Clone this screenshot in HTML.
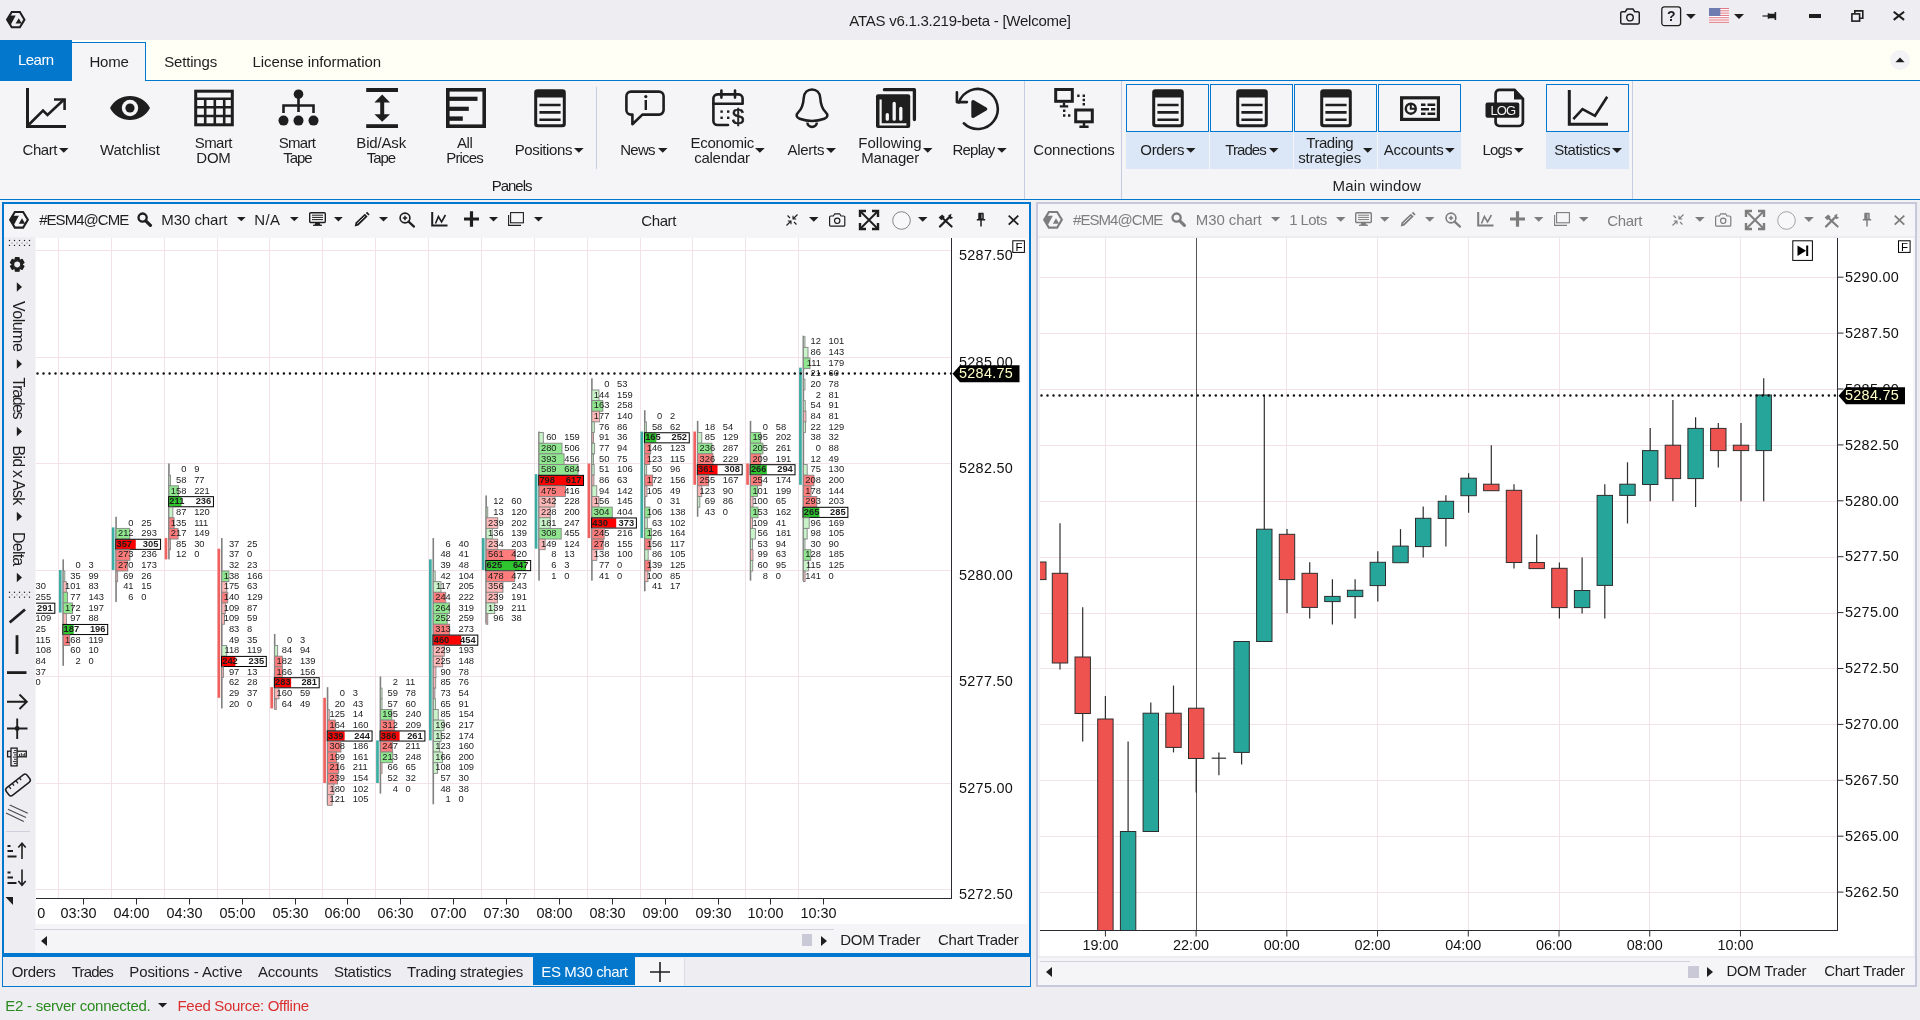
<!DOCTYPE html>
<html lang="en"><head><meta charset="utf-8"><title>ATAS v6.1.3.219-beta - [Welcome]</title>
<style>
html,body{margin:0;padding:0;}
body{width:1920px;height:1020px;overflow:hidden;background:#eeeef2;font-family:"Liberation Sans",sans-serif;position:relative;}
div{position:absolute;box-sizing:border-box;}
.t{position:absolute;white-space:nowrap;line-height:20px;color:#1e1e1e;}
.a{position:absolute;display:block;overflow:visible;}
svg text{font-family:"Liberation Sans",sans-serif;}
</style></head>
<body>
<div id="app" style="left:0;top:0;width:1920px;height:1020px;will-change:transform;">
<div id="titlebar" style="left:0;top:0;width:1920px;height:40px;background:#eeeef2;">
<svg class="a" style="left:6.20px;top:11.30px" width="19.6" height="17.25" viewBox="0 0 20 17.6"><path d="M1.15 8.8L5.85 1H14.15L18.85 8.8L14.15 16.6H5.85Z" fill="none" stroke="#1e1e1e" stroke-width="2.1" stroke-linejoin="miter"/><path d="M1.2 8.8L3.9 4.7H9.9L4.7 14.2Z" fill="#1e1e1e"/><path d="M13 7.3L9.8 12.7H16.2Z" fill="#1e1e1e"/></svg>
<span class="t" style="left:849.30px;top:11.00px;font-size:15px;letter-spacing:-0.244px;">ATAS v6.1.3.219-beta - [Welcome]</span>
<svg class="a" style="left:1620.00px;top:7.50px" width="20.0" height="17.0" viewBox="0 0 16.5 14"><path d="M1.800 3H4.400L5.800 0.800H10.700L12.100 3H14.700a1.200 1.200 0 0 1 1.200 1.200V12a1.200 1.200 0 0 1 -1.200 1.200H1.800A1.200 1.200 0 0 1 0.600 12V4.200A1.200 1.200 0 0 1 1.800 3Z" fill="none" stroke="#1e1e1e" stroke-width="1.200"/><circle cx="8.250" cy="7.900" r="2.700" fill="none" stroke="#1e1e1e" stroke-width="1.200"/></svg>
<svg class="a" style="left:1661.00px;top:6.00px" width="21" height="21" viewBox="0 0 21 21"><rect x="0.800" y="0.800" width="18.800" height="18.800" rx="2.500" fill="none" stroke="#1e1e1e" stroke-width="1.300"/><text x="10.200" y="15.200" font-size="14" font-weight="bold" text-anchor="middle" fill="#1e1e1e">?</text></svg>
<svg class="a" style="left:1686.00px;top:13.95px" width="9.80" height="4.90" viewBox="0 0 10 5"><path d="M0 0H10L5 5Z" fill="#1e1e1e"/></svg>
<svg class="a" style="left:1709.00px;top:8.00px" width="20" height="15.2" viewBox="0 0 20 15.2"><rect x="0" y="0" width="20" height="15" fill="#fff"/><rect x="0" y="0.00" width="20" height="1.050" fill="#e07a86"/><rect x="0" y="2.30" width="20" height="1.050" fill="#e07a86"/><rect x="0" y="4.60" width="20" height="1.050" fill="#e07a86"/><rect x="0" y="6.90" width="20" height="1.050" fill="#e07a86"/><rect x="0" y="9.20" width="20" height="1.050" fill="#e07a86"/><rect x="0" y="11.50" width="20" height="1.050" fill="#e07a86"/><rect x="0" y="13.80" width="20" height="1.050" fill="#e07a86"/><rect x="0" y="0" width="11.300" height="8" fill="#6e7cb2"/></svg>
<svg class="a" style="left:1734.00px;top:13.90px" width="10.00" height="5.00" viewBox="0 0 10 5"><path d="M0 0H10L5 5Z" fill="#1e1e1e"/></svg>
<svg class="a" style="left:1762.00px;top:11.00px" width="16" height="10" viewBox="0 0 16 10"><path d="M0.500 5H8" stroke="#1e1e1e" stroke-width="1.200"/><path d="M6.500 2.200V7.800M7.400 3.600H12.600V6.400H7.400ZM13.400 1V9" fill="#1e1e1e" stroke="#1e1e1e" stroke-width="1.600"/></svg>
<div style="left:1809px;top:14px;width:12px;height:4px;background:#1e1e1e;"></div>
<svg class="a" style="left:1851.00px;top:10.00px" width="13" height="12" viewBox="0 0 13 12"><rect x="0.900" y="3.900" width="7.700" height="7.200" fill="none" stroke="#1e1e1e" stroke-width="1.600"/><path d="M3.800 3.600V0.900H11.800V8.200H9" fill="none" stroke="#1e1e1e" stroke-width="1.600"/></svg>
<svg class="a" style="left:1893.30px;top:11.30px" width="11.8" height="9.6" viewBox="0 0 11.8 9.6"><path d="M0.700 0.700L11.100000000000001 8.9M11.100000000000001 0.700L0.700 8.9" stroke="#1e1e1e" stroke-width="2"/></svg>
</div>
<div id="tabstrip" style="left:0;top:40px;width:1920px;height:41px;background:#fffff5;border-bottom:1px solid #0078d0;">
</div>
<div style="left:0px;top:40px;width:72px;height:41px;background:#0277cc;"></div>
<span class="t" style="left:18.00px;top:50.00px;font-size:15px;letter-spacing:-0.541px;color:#ffffff;">Learn</span>
<div style="left:71px;top:42px;width:75px;height:39px;background:#f5f5f7;border:1px solid #0078d0;border-bottom:none;"></div>
<span class="t" style="left:89.50px;top:52.00px;font-size:15px;letter-spacing:-0.237px;">Home</span>
<span class="t" style="left:164.20px;top:52.00px;font-size:15px;letter-spacing:-0.171px;">Settings</span>
<span class="t" style="left:252.50px;top:52.00px;font-size:15px;letter-spacing:-0.087px;">License information</span>
<svg class="a" style="left:1890.00px;top:50.00px" width="20" height="20" viewBox="0 0 20 20"><circle cx="10" cy="10" r="10" fill="#f3f3f6"/><path d="M5.400 12.200H14.600L10 7.600Z" fill="#1e1e1e"/></svg>
<div id="ribbon" style="left:0;top:81px;width:1920px;height:119px;background:#f5f5f7;border-bottom:1px solid #0078d0;"></div>
<div style="left:0px;top:200px;width:1920px;height:2px;background:#f2f2f5;"></div>
<div style="left:596px;top:87px;width:1px;height:82px;background:#c5cbe0;"></div>
<div style="left:1024px;top:81px;width:1px;height:118px;background:#c5cbe0;"></div>
<div style="left:1121px;top:81px;width:1px;height:118px;background:#c5cbe0;"></div>
<div style="left:1632px;top:81px;width:1px;height:118px;background:#c5cbe0;"></div>
<div style="left:1126px;top:132px;width:83px;height:37px;background:#dbe7f6;"></div>
<div style="left:1126px;top:84px;width:83px;height:48px;background:#f5f5f7;border:1px solid #0078d0;"></div>
<div style="left:1210px;top:132px;width:83px;height:37px;background:#dbe7f6;"></div>
<div style="left:1210px;top:84px;width:83px;height:48px;background:#f5f5f7;border:1px solid #0078d0;"></div>
<div style="left:1294px;top:132px;width:83px;height:37px;background:#dbe7f6;"></div>
<div style="left:1294px;top:84px;width:83px;height:48px;background:#f5f5f7;border:1px solid #0078d0;"></div>
<div style="left:1378px;top:132px;width:83px;height:37px;background:#dbe7f6;"></div>
<div style="left:1378px;top:84px;width:83px;height:48px;background:#f5f5f7;border:1px solid #0078d0;"></div>
<div style="left:1546px;top:132px;width:83px;height:37px;background:#dbe7f6;"></div>
<div style="left:1546px;top:84px;width:83px;height:48px;background:#f5f5f7;border:1px solid #0078d0;"></div>
<svg class="a" style="left:26.00px;top:88.00px" width="40" height="40" viewBox="0 0 40 40"><path d="M1.5 0V38.5H40" fill="none" stroke="#1e1e1e" stroke-width="3"/><path d="M3 36.5L17 22.5L21.5 27L38 11.5" fill="none" stroke="#1e1e1e" stroke-width="2.6"/><path d="M28 11.5H38.6V22" fill="none" stroke="#1e1e1e" stroke-width="2.6"/></svg>
<svg class="a" style="left:110.00px;top:88.00px" width="40" height="40" viewBox="0 0 40 40"><path d="M0 20C8 4 32 4 40 20C32 36 8 36 0 20Z" fill="#1e1e1e"/><circle cx="20" cy="20" r="8.2" fill="#f5f5f7"/><circle cx="20" cy="20" r="4.6" fill="#1e1e1e"/></svg>
<svg class="a" style="left:194.00px;top:88.00px" width="40" height="40" viewBox="0 0 40 40"><rect x="1.7" y="3.2" width="36.6" height="33.6" fill="none" stroke="#1e1e1e" stroke-width="3"/><path d="M2 10.8H38M2 19.2H38M2 28H38M11.2 10.8V36M20.8 10.8V36M30.2 10.8V36" stroke="#1e1e1e" stroke-width="2.6" fill="none"/></svg>
<svg class="a" style="left:277.50px;top:88.00px" width="40" height="40" viewBox="0 0 40 40"><circle cx="20.5" cy="6.2" r="4.8" fill="#1e1e1e"/><path d="M20.5 10V24M5.5 25V17.5H35.5V25" fill="none" stroke="#1e1e1e" stroke-width="2.6"/><circle cx="5.5" cy="32.6" r="5" fill="#1e1e1e"/><circle cx="20.5" cy="32.6" r="5" fill="#1e1e1e"/><circle cx="35.5" cy="32.6" r="5" fill="#1e1e1e"/></svg>
<svg class="a" style="left:362.00px;top:88.00px" width="40" height="40" viewBox="0 0 40 40"><rect x="4.2" y="0" width="31.8" height="4" fill="#1e1e1e"/><rect x="4.2" y="36.2" width="31.8" height="3.8" fill="#1e1e1e"/><path d="M20.2 6.6L28 14.6H22.2V26.2H28L20.2 33.8L12.4 26.2H18.2V14.6H12.4Z" fill="#1e1e1e"/></svg>
<svg class="a" style="left:446.00px;top:88.00px" width="40" height="40" viewBox="0 0 40 40"><rect x="1.8" y="1.8" width="36.4" height="36.4" fill="none" stroke="#1e1e1e" stroke-width="3.6"/><rect x="3" y="8.7" width="28.5" height="4.2" fill="#1e1e1e"/><rect x="3" y="18.7" width="19.8" height="4.2" fill="#1e1e1e"/><rect x="3" y="28.4" width="13.8" height="4.4" fill="#1e1e1e"/></svg>
<svg class="a" style="left:530.00px;top:88.00px" width="40" height="40" viewBox="0 0 40 40"><path d="M7.5 1.2H32.5a3.3 3.3 0 0 1 3.3 3.3V36a3.3 3.3 0 0 1 -3.3 3.3H7.5a3.3 3.3 0 0 1 -3.3 -3.3V4.5a3.3 3.3 0 0 1 3.3 -3.3Z" fill="#1e1e1e"/><path d="M7.2 9.6H32.8V35.2a1 1 0 0 1 -1 1H8.2a1 1 0 0 1 -1 -1Z" fill="#f5f5f7"/><path d="M9.4 17H30.6M9.4 24.4H30.6M9.4 31.7H30.6" stroke="#1e1e1e" stroke-width="2.6"/></svg>
<svg class="a" style="left:624.00px;top:88.00px" width="40" height="40" viewBox="0 0 40 40"><path d="M7 3.6H35a4.6 4.6 0 0 1 4.6 4.6V22a4.6 4.6 0 0 1 -4.6 4.6H18.4L8.4 36.2V26.6H7a4.6 4.6 0 0 1 -4.6 -4.6V8.200a4.6 4.600 0 0 1 4.6 -4.6Z" fill="none" stroke="#1e1e1e" stroke-width="2.6" stroke-linejoin="round"/><circle cx="21.8" cy="8.6" r="1.6" fill="#1e1e1e"/><path d="M21.8 12V22" stroke="#1e1e1e" stroke-width="2.4"/></svg>
<svg class="a" style="left:708.00px;top:88.00px" width="40" height="40" viewBox="0 0 40 40"><path d="M34.6 15V10.4a4 4 0 0 0 -4 -4H9.4a4 4 0 0 0 -4 4V33a4 4 0 0 0 4 4H20" fill="none" stroke="#1e1e1e" stroke-width="2.6" stroke-linecap="round"/><path d="M5.4 15.8H34.6M13.4 2.6V9.6M27 2.6V9.6" stroke="#1e1e1e" stroke-width="2.6" stroke-linecap="round"/><rect x="12.4" y="22.4" width="2.4" height="2.4" fill="#1e1e1e"/><rect x="19" y="22.4" width="2.4" height="2.4" fill="#1e1e1e"/><rect x="12.4" y="28.6" width="2.4" height="2.4" fill="#1e1e1e"/><rect x="19" y="28.6" width="2.4" height="2.4" fill="#1e1e1e"/><text x="30.200" y="35.600" font-size="22" text-anchor="middle" fill="#1e1e1e" stroke="#1e1e1e" stroke-width="0.600" font-family="Liberation Sans,sans-serif">$</text></svg>
<svg class="a" style="left:792.00px;top:88.00px" width="40" height="40" viewBox="0 0 40 40"><path d="M20 1.400C24.600 1.400 27.800 4.600 28.200 9.600C28.600 15 29.200 20 33.600 24.200C36.400 26.800 35.800 29.600 32.400 30.800C25 33.400 15 33.400 7.600 30.800C4.200 29.600 3.600 26.800 6.400 24.200C10.800 20 11.400 15 11.800 9.600C12.200 4.600 15.400 1.400 20 1.400Z" fill="none" stroke="#1e1e1e" stroke-width="2.500"/><path d="M15.400 34.600a4.700 4.300 0 0 0 9.400 0" fill="none" stroke="#1e1e1e" stroke-width="2.500"/></svg>
<svg class="a" style="left:875.80px;top:88.00px" width="40" height="40" viewBox="0 0 40 40"><path d="M8.400 1.700H38.400V31.600" fill="none" stroke="#1e1e1e" stroke-width="3.300" stroke-linecap="round" stroke-linejoin="round"/><rect x="0" y="6.200" width="34.200" height="33.800" rx="2" fill="#1e1e1e"/><path d="M4.600 11.600V36.400H30.400" fill="none" stroke="#f5f5f7" stroke-width="2.200"/><path d="M11.300 26.600V31.200M18.200 15.400V31.200M24.800 20.400V31.200" stroke="#f5f5f7" stroke-width="3.300" stroke-linecap="round"/></svg>
<svg class="a" style="left:958.00px;top:88.00px" width="40" height="40" viewBox="0 0 40 40"><path d="M0.900 14.400A20 20 0 1 1 5.800 35.300" fill="none" stroke="#1e1e1e" stroke-width="2.600" stroke-linecap="round"/><path d="M-1.100 4.200V14.100H8.900" fill="none" stroke="#1e1e1e" stroke-width="2.600" stroke-linecap="round" stroke-linejoin="round"/><path d="M13.300 13.800a1.800 1.800 0 0 1 2.700 -1.560L28.400 19.400a1.800 1.800 0 0 1 0 3.100L16 29.800a1.800 1.800 0 0 1 -2.700 -1.560Z" fill="#1e1e1e"/></svg>
<svg class="a" style="left:1054.00px;top:88.00px" width="40" height="40" viewBox="0 0 40 40"><rect x="1.700" y="1.500" width="16.600" height="11.800" fill="none" stroke="#1e1e1e" stroke-width="3"/><path d="M10 14.500V18M5.800 18.400H14.200" stroke="#1e1e1e" stroke-width="2.400"/><rect x="21.700" y="22" width="16.600" height="11.800" fill="none" stroke="#1e1e1e" stroke-width="3"/><path d="M30 35V38.400M25.400 38.800H34.600" stroke="#1e1e1e" stroke-width="2.400"/><path d="M9 22.800h2.400M9 27.500h2.400M14 27.500h2.400M23.200 7.800h2.400M28.600 7.800h2.400M28.600 12h2.400M28.600 16.200h2.400" stroke="#1e1e1e" stroke-width="2.400"/></svg>
<svg class="a" style="left:1147.50px;top:88.00px" width="40" height="40" viewBox="0 0 40 40"><path d="M7.5 1.2H32.5a3.3 3.3 0 0 1 3.3 3.3V36a3.3 3.3 0 0 1 -3.3 3.3H7.5a3.3 3.3 0 0 1 -3.3 -3.3V4.5a3.3 3.3 0 0 1 3.3 -3.3Z" fill="#1e1e1e"/><path d="M7.2 9.6H32.8V35.2a1 1 0 0 1 -1 1H8.2a1 1 0 0 1 -1 -1Z" fill="#f5f5f7"/><path d="M9.4 17H30.6M9.4 24.4H30.6M9.4 31.7H30.6" stroke="#1e1e1e" stroke-width="2.6"/></svg>
<svg class="a" style="left:1231.50px;top:88.00px" width="40" height="40" viewBox="0 0 40 40"><path d="M7.5 1.2H32.5a3.3 3.3 0 0 1 3.3 3.3V36a3.3 3.3 0 0 1 -3.3 3.3H7.5a3.3 3.3 0 0 1 -3.3 -3.3V4.5a3.3 3.3 0 0 1 3.3 -3.3Z" fill="#1e1e1e"/><path d="M7.2 9.6H32.8V35.2a1 1 0 0 1 -1 1H8.2a1 1 0 0 1 -1 -1Z" fill="#f5f5f7"/><path d="M9.4 17H30.6M9.4 24.4H30.6M9.4 31.7H30.6" stroke="#1e1e1e" stroke-width="2.6"/></svg>
<svg class="a" style="left:1315.50px;top:88.00px" width="40" height="40" viewBox="0 0 40 40"><path d="M7.5 1.2H32.5a3.3 3.3 0 0 1 3.3 3.3V36a3.3 3.3 0 0 1 -3.3 3.3H7.5a3.3 3.3 0 0 1 -3.3 -3.3V4.5a3.3 3.3 0 0 1 3.3 -3.3Z" fill="#1e1e1e"/><path d="M7.2 9.6H32.8V35.2a1 1 0 0 1 -1 1H8.2a1 1 0 0 1 -1 -1Z" fill="#f5f5f7"/><path d="M9.4 17H30.6M9.4 24.4H30.6M9.4 31.7H30.6" stroke="#1e1e1e" stroke-width="2.6"/></svg>
<svg class="a" style="left:1400.00px;top:88.00px" width="40" height="40" viewBox="0 0 40 40"><rect x="1.600" y="9.800" width="36.800" height="21.600" fill="none" stroke="#1e1e1e" stroke-width="3.200"/><circle cx="10.800" cy="20.700" r="5" fill="none" stroke="#1e1e1e" stroke-width="2.400"/><path d="M10.800 16V20.700H15.500" fill="none" stroke="#1e1e1e" stroke-width="2"/><path d="M21 16.800H25.500M27.500 16.800H35.200M21 21.300H29M31 21.300H35.200M21 25.800H25.500M27.500 25.800H35.200" stroke="#1e1e1e" stroke-width="2.500"/></svg>
<svg class="a" style="left:1484.50px;top:88.00px" width="40" height="40" viewBox="0 0 40 40"><path d="M14.300 1.900H29.500L37.900 10.700V34.300a3.700 3.700 0 0 1 -3.700 3.700H14.300a3.700 3.700 0 0 1 -3.700 -3.700V5.600A3.700 3.700 0 0 1 14.300 1.900Z" fill="none" stroke="#1e1e1e" stroke-width="2.700"/><path d="M29 1.400L38.600 11.400H29Z" fill="#1e1e1e"/><rect x="0.500" y="14.500" width="33.800" height="15.200" rx="2" fill="#1e1e1e"/><text x="17.800" y="27.200" font-size="13" text-anchor="middle" fill="#f5f5f7" font-family="Liberation Sans,sans-serif" letter-spacing="-0.900">LOG</text></svg>
<svg class="a" style="left:1568.00px;top:88.00px" width="40" height="40" viewBox="0 0 40 40"><path d="M1.300 2V36.300H40" fill="none" stroke="#1e1e1e" stroke-width="3"/><path d="M5.300 31.200L14.500 21.200L27 27.800L39.200 8.700" fill="none" stroke="#1e1e1e" stroke-width="2.600"/></svg>
<span class="t" style="left:22.50px;top:140.00px;font-size:15px;letter-spacing:-0.420px;">Chart</span>
<svg class="a" style="left:59.00px;top:148.03px" width="9.50" height="4.75" viewBox="0 0 10 5"><path d="M0 0H10L5 5Z" fill="#1e1e1e"/></svg>
<span class="t" style="left:100.00px;top:140.00px;font-size:15px;letter-spacing:-0.036px;">Watchlist</span>
<span class="t" style="left:194.70px;top:133.00px;font-size:15px;letter-spacing:-0.551px;">Smart</span>
<span class="t" style="left:196.30px;top:148.00px;font-size:15px;letter-spacing:-0.248px;">DOM</span>
<span class="t" style="left:278.70px;top:133.00px;font-size:15px;letter-spacing:-0.676px;">Smart</span>
<span class="t" style="left:283.30px;top:148.00px;font-size:15px;letter-spacing:-1.109px;">Tape</span>
<span class="t" style="left:356.30px;top:133.00px;font-size:15px;letter-spacing:-0.159px;">Bid/Ask</span>
<span class="t" style="left:366.70px;top:148.00px;font-size:15px;letter-spacing:-1.009px;">Tape</span>
<span class="t" style="left:457.00px;top:133.00px;font-size:15px;letter-spacing:-0.435px;">All</span>
<span class="t" style="left:446.20px;top:148.00px;font-size:15px;letter-spacing:-0.815px;">Prices</span>
<span class="t" style="left:514.70px;top:140.00px;font-size:15px;letter-spacing:-0.383px;">Positions</span>
<svg class="a" style="left:574.00px;top:147.97px" width="9.70" height="4.85" viewBox="0 0 10 5"><path d="M0 0H10L5 5Z" fill="#1e1e1e"/></svg>
<span class="t" style="left:620.30px;top:140.00px;font-size:15px;letter-spacing:-0.769px;">News</span>
<svg class="a" style="left:657.50px;top:148.03px" width="9.50" height="4.75" viewBox="0 0 10 5"><path d="M0 0H10L5 5Z" fill="#1e1e1e"/></svg>
<span class="t" style="left:690.50px;top:133.00px;font-size:15px;letter-spacing:-0.309px;">Economic</span>
<span class="t" style="left:694.20px;top:148.00px;font-size:15px;letter-spacing:-0.249px;">calendar</span>
<svg class="a" style="left:755.30px;top:147.97px" width="9.70" height="4.85" viewBox="0 0 10 5"><path d="M0 0H10L5 5Z" fill="#1e1e1e"/></svg>
<span class="t" style="left:787.50px;top:140.00px;font-size:15px;letter-spacing:-0.269px;">Alerts</span>
<svg class="a" style="left:826.00px;top:147.90px" width="10.00" height="5.00" viewBox="0 0 10 5"><path d="M0 0H10L5 5Z" fill="#1e1e1e"/></svg>
<span class="t" style="left:858.30px;top:133.00px;font-size:15px;">Following</span>
<span class="t" style="left:861.30px;top:148.00px;font-size:15px;letter-spacing:-0.217px;">Manager</span>
<svg class="a" style="left:923.30px;top:148.03px" width="9.50" height="4.75" viewBox="0 0 10 5"><path d="M0 0H10L5 5Z" fill="#1e1e1e"/></svg>
<span class="t" style="left:952.50px;top:140.00px;font-size:15px;letter-spacing:-0.778px;">Replay</span>
<svg class="a" style="left:997.00px;top:147.97px" width="9.70" height="4.85" viewBox="0 0 10 5"><path d="M0 0H10L5 5Z" fill="#1e1e1e"/></svg>
<span class="t" style="left:1033.30px;top:140.00px;font-size:15px;letter-spacing:-0.199px;">Connections</span>
<span class="t" style="left:1140.30px;top:140.00px;font-size:15px;letter-spacing:-0.329px;">Orders</span>
<svg class="a" style="left:1186.30px;top:148.03px" width="9.50" height="4.75" viewBox="0 0 10 5"><path d="M0 0H10L5 5Z" fill="#1e1e1e"/></svg>
<span class="t" style="left:1225.30px;top:140.00px;font-size:15px;letter-spacing:-0.946px;">Trades</span>
<svg class="a" style="left:1268.50px;top:148.03px" width="9.50" height="4.75" viewBox="0 0 10 5"><path d="M0 0H10L5 5Z" fill="#1e1e1e"/></svg>
<span class="t" style="left:1306.30px;top:133.00px;font-size:15px;letter-spacing:-0.484px;">Trading</span>
<span class="t" style="left:1298.30px;top:148.00px;font-size:15px;letter-spacing:-0.237px;">strategies</span>
<svg class="a" style="left:1363.30px;top:148.03px" width="9.50" height="4.75" viewBox="0 0 10 5"><path d="M0 0H10L5 5Z" fill="#1e1e1e"/></svg>
<span class="t" style="left:1383.70px;top:140.00px;font-size:15px;letter-spacing:-0.243px;">Accounts</span>
<svg class="a" style="left:1445.30px;top:147.97px" width="9.70" height="4.85" viewBox="0 0 10 5"><path d="M0 0H10L5 5Z" fill="#1e1e1e"/></svg>
<span class="t" style="left:1482.50px;top:140.00px;font-size:15px;letter-spacing:-0.842px;">Logs</span>
<svg class="a" style="left:1514.00px;top:147.97px" width="9.70" height="4.85" viewBox="0 0 10 5"><path d="M0 0H10L5 5Z" fill="#1e1e1e"/></svg>
<span class="t" style="left:1554.20px;top:140.00px;font-size:15px;letter-spacing:-0.413px;">Statistics</span>
<svg class="a" style="left:1612.00px;top:147.90px" width="10.00" height="5.00" viewBox="0 0 10 5"><path d="M0 0H10L5 5Z" fill="#1e1e1e"/></svg>
<span class="t" style="left:491.70px;top:176.10px;font-size:15px;letter-spacing:-1.013px;">Panels</span>
<span class="t" style="left:1332.50px;top:176.10px;font-size:15px;letter-spacing:0.160px;">Main window</span>
<div id="leftpanel" style="left:2px;top:202px;width:1029px;height:755px;background:#f5f5f7;border:2px solid #0078d0;border-bottom-width:4px;"></div>
<svg class="a" style="left:9.00px;top:211.20px" width="20" height="17.6" viewBox="0 0 20 17.6"><path d="M1.15 8.8L5.85 1H14.15L18.85 8.8L14.15 16.6H5.85Z" fill="none" stroke="#1e1e1e" stroke-width="2.1" stroke-linejoin="miter"/><path d="M1.2 8.8L3.9 4.7H9.9L4.7 14.2Z" fill="#1e1e1e"/><path d="M13 7.3L9.8 12.7H16.2Z" fill="#1e1e1e"/></svg>
<span class="t" style="left:39.20px;top:209.60px;font-size:15px;letter-spacing:-0.969px;">#ESM4@CME</span>
<svg class="a" style="left:136.70px;top:211.60px" width="15" height="15" viewBox="0 0 15 15"><circle cx="5.600" cy="5.600" r="4.100" fill="none" stroke="#1e1e1e" stroke-width="2.300"/><path d="M8.800 8.800L13.400 13.400" stroke="#1e1e1e" stroke-width="3.200" stroke-linecap="round"/></svg>
<span class="t" style="left:161.30px;top:209.60px;font-size:15px;letter-spacing:-0.062px;">M30 chart</span>
<svg class="a" style="left:236.70px;top:217.45px" width="8.60" height="4.30" viewBox="0 0 10 5"><path d="M0 0H10L5 5Z" fill="#1e1e1e"/></svg>
<span class="t" style="left:254.20px;top:209.60px;font-size:15px;letter-spacing:0.398px;">N/A</span>
<svg class="a" style="left:289.70px;top:217.45px" width="8.60" height="4.30" viewBox="0 0 10 5"><path d="M0 0H10L5 5Z" fill="#1e1e1e"/></svg>
<svg class="a" style="left:308.60px;top:212.40px" width="17" height="14" viewBox="0 0 17 14"><rect x="0.700" y="0.700" width="15.600" height="9.800" rx="1" fill="none" stroke="#1e1e1e" stroke-width="1.400"/><path d="M3 3.200H14M3 5.400H14M3 7.600H14" stroke="#1e1e1e" stroke-width="1"/><path d="M6.500 10.500L5.500 13H11.500L10.500 10.500Z" fill="#1e1e1e"/><path d="M4 13.300H13" stroke="#1e1e1e" stroke-width="1.200"/></svg>
<svg class="a" style="left:333.80px;top:217.40px" width="8.80" height="4.40" viewBox="0 0 10 5"><path d="M0 0H10L5 5Z" fill="#1e1e1e"/></svg>
<svg class="a" style="left:354.20px;top:211.70px" width="16" height="15" viewBox="0 0 16 15"><path d="M0.600 14.600L1.600 10.400L10.800 1.800L13.600 4.600L4.400 13.400Z" fill="#1e1e1e"/><path d="M11.800 1L13.200 -0.200L15.600 2.400L14.400 3.600Z" fill="#1e1e1e"/><path d="M3.200 11.600L10.900 4.300" stroke="#f5f5f7" stroke-width="0.900"/></svg>
<svg class="a" style="left:379.00px;top:217.35px" width="9.00" height="4.50" viewBox="0 0 10 5"><path d="M0 0H10L5 5Z" fill="#1e1e1e"/></svg>
<svg class="a" style="left:399.00px;top:212.00px" width="16" height="15" viewBox="0 0 16 15"><circle cx="6" cy="6" r="4.900" fill="none" stroke="#1e1e1e" stroke-width="1.600"/><path d="M9.600 9.600L15 14.600" stroke="#1e1e1e" stroke-width="2.200" stroke-linecap="round"/><path d="M6 3.800V8.200M3.800 6H8.200" stroke="#1e1e1e" stroke-width="1.500"/></svg>
<svg class="a" style="left:430.50px;top:212.00px" width="17" height="15" viewBox="0 0 17 15"><path d="M1.200 0V13.600H16.500" fill="none" stroke="#1e1e1e" stroke-width="2"/><path d="M4.500 11.500L7.400 4.600L10.600 10L14.400 3" fill="none" stroke="#1e1e1e" stroke-width="1.600"/></svg>
<svg class="a" style="left:464.00px;top:211.00px" width="15" height="16" viewBox="0 0 15 16"><path d="M7.500 0.300V15.700M0 8H15" stroke="#1e1e1e" stroke-width="3.200"/></svg>
<svg class="a" style="left:488.50px;top:217.35px" width="9.00" height="4.50" viewBox="0 0 10 5"><path d="M0 0H10L5 5Z" fill="#1e1e1e"/></svg>
<svg class="a" style="left:508.00px;top:212.40px" width="16" height="14" viewBox="0 0 16 14"><rect x="2.600" y="0.600" width="12.800" height="10.200" fill="#f5f5f7" stroke="#1e1e1e" stroke-width="1.100"/><path d="M0.600 3V13.400H13" fill="none" stroke="#1e1e1e" stroke-width="1.100"/></svg>
<svg class="a" style="left:533.50px;top:217.35px" width="9.00" height="4.50" viewBox="0 0 10 5"><path d="M0 0H10L5 5Z" fill="#1e1e1e"/></svg>
<span class="t" style="left:641.30px;top:210.60px;font-size:15px;letter-spacing:-0.420px;">Chart</span>
<svg class="a" style="left:786.30px;top:214.00px" width="12" height="12" viewBox="0 0 12 12"><path d="M0.500 11.500L5 7M5 10.200V7H1.800M11.500 0.500L7 5M7 1.800V5H10.200M1.500 1.500L4 4M10.500 10.500L8 8" fill="none" stroke="#1e1e1e" stroke-width="1.100"/></svg>
<svg class="a" style="left:809.00px;top:217.22px" width="9.50" height="4.75" viewBox="0 0 10 5"><path d="M0 0H10L5 5Z" fill="#1e1e1e"/></svg>
<svg class="a" style="left:829.00px;top:213.00px" width="16.4" height="13.9" viewBox="0 0 16.5 14"><path d="M1.800 3H4.400L5.800 0.800H10.700L12.100 3H14.700a1.200 1.200 0 0 1 1.200 1.200V12a1.200 1.200 0 0 1 -1.200 1.200H1.800A1.200 1.200 0 0 1 0.600 12V4.200A1.200 1.200 0 0 1 1.800 3Z" fill="none" stroke="#1e1e1e" stroke-width="1.200"/><circle cx="8.250" cy="7.900" r="2.700" fill="none" stroke="#1e1e1e" stroke-width="1.200"/></svg>
<svg class="a" style="left:859.00px;top:210.20px" width="20" height="20" viewBox="0 0 20 20"><path d="M1.500 1.500L18.500 18.500M18.500 1.500L1.500 18.500" stroke="#1e1e1e" stroke-width="1.900"/><path d="M1 7V1H7M13 1H19V7M19 13V19H13M7 19H1V13" fill="none" stroke="#1e1e1e" stroke-width="2.400"/></svg>
<svg class="a" style="left:891.50px;top:210.50px" width="19" height="19" viewBox="0 0 19 19"><circle cx="9.500" cy="9.500" r="8.800" fill="#f8f8fa" stroke="#777" stroke-width="0.900"/></svg>
<svg class="a" style="left:918.00px;top:217.22px" width="9.50" height="4.75" viewBox="0 0 10 5"><path d="M0 0H10L5 5Z" fill="#1e1e1e"/></svg>
<svg class="a" style="left:938.00px;top:213.50px" width="16" height="14" viewBox="0 0 16 14"><path d="M2 12.500L12 2.500" stroke="#1e1e1e" stroke-width="2.300" stroke-linecap="round"/><path d="M10.300 1.200L13.600 -0.200L12.800 2.600L15.200 3.800L12.400 5.200Z" fill="#1e1e1e"/><path d="M4.200 3.800L13.600 12.600" stroke="#1e1e1e" stroke-width="2.100" stroke-linecap="round"/><path d="M0.600 3.600L4.200 0.400L6.800 3L3.400 6.200Z" fill="#1e1e1e"/></svg>
<svg class="a" style="left:975.50px;top:213.00px" width="10" height="14" viewBox="0 0 10 14"><path d="M2.500 0.600H7.500M3 0.600V6.200H7V0.600M0.800 6.800H9.200M5 7V13.600" fill="none" stroke="#1e1e1e" stroke-width="1.500"/><rect x="3" y="1" width="2.600" height="5.600" fill="#1e1e1e"/></svg>
<svg class="a" style="left:1007.50px;top:215.00px" width="11" height="10.4" viewBox="0 0 11 10.4"><path d="M0.700 0.700L10.3 9.700000000000001M10.3 0.700L0.700 9.700000000000001" stroke="#1e1e1e" stroke-width="1.8"/></svg>
<div style="left:4px;top:237px;width:30.5px;height:716px;background:#eeeef2;"></div>
<svg class="a" style="left:0;top:0" width="40" height="960" viewBox="0 0 40 960"><rect x="8.90" y="239.90" width="1.200" height="1.200" fill="#1e1e1e"/><rect x="8.90" y="244.80" width="1.200" height="1.200" fill="#1e1e1e"/><rect x="11.40" y="242.40" width="1.300" height="1.300" fill="#9a9aa0"/><rect x="13.90" y="239.90" width="1.200" height="1.200" fill="#1e1e1e"/><rect x="13.90" y="244.80" width="1.200" height="1.200" fill="#1e1e1e"/><rect x="16.40" y="242.40" width="1.300" height="1.300" fill="#9a9aa0"/><rect x="18.90" y="239.90" width="1.200" height="1.200" fill="#1e1e1e"/><rect x="18.90" y="244.80" width="1.200" height="1.200" fill="#1e1e1e"/><rect x="21.40" y="242.40" width="1.300" height="1.300" fill="#9a9aa0"/><rect x="23.90" y="239.90" width="1.200" height="1.200" fill="#1e1e1e"/><rect x="23.90" y="244.80" width="1.200" height="1.200" fill="#1e1e1e"/><rect x="26.40" y="242.40" width="1.300" height="1.300" fill="#9a9aa0"/><rect x="28.90" y="239.90" width="1.200" height="1.200" fill="#1e1e1e"/><rect x="28.90" y="244.80" width="1.200" height="1.200" fill="#1e1e1e"/><rect x="8.90" y="591.70" width="1.200" height="1.200" fill="#1e1e1e"/><rect x="8.90" y="596.60" width="1.200" height="1.200" fill="#1e1e1e"/><rect x="11.40" y="594.20" width="1.300" height="1.300" fill="#9a9aa0"/><rect x="13.90" y="591.70" width="1.200" height="1.200" fill="#1e1e1e"/><rect x="13.90" y="596.60" width="1.200" height="1.200" fill="#1e1e1e"/><rect x="16.40" y="594.20" width="1.300" height="1.300" fill="#9a9aa0"/><rect x="18.90" y="591.70" width="1.200" height="1.200" fill="#1e1e1e"/><rect x="18.90" y="596.60" width="1.200" height="1.200" fill="#1e1e1e"/><rect x="21.40" y="594.20" width="1.300" height="1.300" fill="#9a9aa0"/><rect x="23.90" y="591.70" width="1.200" height="1.200" fill="#1e1e1e"/><rect x="23.90" y="596.60" width="1.200" height="1.200" fill="#1e1e1e"/><rect x="26.40" y="594.20" width="1.300" height="1.300" fill="#9a9aa0"/><rect x="28.90" y="591.70" width="1.200" height="1.200" fill="#1e1e1e"/><rect x="28.90" y="596.60" width="1.200" height="1.200" fill="#1e1e1e"/><path d="M19.22 269.19L19.07 271.15L15.33 271.15L15.18 269.19L14.06 268.55L12.29 269.39L10.42 266.16L12.04 265.04L12.04 263.76L10.42 262.64L12.29 259.41L14.06 260.25L15.18 259.61L15.33 257.65L19.07 257.65L19.22 259.61L20.34 260.25L22.11 259.41L23.98 262.64L22.36 263.76L22.36 265.04L23.98 266.16L22.11 269.39L20.34 268.55ZM20.80 264.40A3.6 3.6 0 1 0 13.60 264.40A3.6 3.6 0 1 0 20.80 264.40Z" fill="#1e1e1e" stroke="#1e1e1e" stroke-width="1.200" stroke-linejoin="round" fill-rule="evenodd"/><path d="M16.800 282.3V291.7L22 287Z" fill="#1e1e1e"/><path d="M16.800 359.3V368.7L22 364Z" fill="#1e1e1e"/><path d="M16.800 426.8V436.2L22 431.5Z" fill="#1e1e1e"/><path d="M16.800 511.8V521.2L22 516.5Z" fill="#1e1e1e"/><path d="M16.800 572.8V582.2L22 577.5Z" fill="#1e1e1e"/><text transform="translate(12.500 301) rotate(90)" font-size="16" letter-spacing="-0.514" fill="#1e1e1e">Volume</text><text transform="translate(12.500 377.5) rotate(90)" font-size="16" letter-spacing="-1.421" fill="#1e1e1e">Trades</text><text transform="translate(12.500 445.5) rotate(90)" font-size="16" letter-spacing="-0.763" fill="#1e1e1e">Bid x Ask</text><text transform="translate(12.500 532) rotate(90)" font-size="16" letter-spacing="-0.788" fill="#1e1e1e">Delta</text><path d="M9.700 622.500L25 609.500" stroke="#1e1e1e" stroke-width="2.800"/><path d="M17 635.200V654" stroke="#1e1e1e" stroke-width="2.800"/><path d="M7 672.600H26.500" stroke="#1e1e1e" stroke-width="2.800"/><path d="M7 701.700H26.500M19.500 694.500L26.800 701.700L19.500 709" fill="none" stroke="#1e1e1e" stroke-width="1.900"/><path d="M7 728.500H27.500M17.200 718.500V739" stroke="#1e1e1e" stroke-width="1.900"/><circle cx="17.200" cy="728.500" r="2.400" fill="#1e1e1e"/><rect x="7.600" y="751.200" width="18.700" height="5.600" fill="#eeeef2" stroke="#1e1e1e" stroke-width="1.300"/><rect x="11" y="748.100" width="6.100" height="17.800" fill="#eeeef2" stroke="#1e1e1e" stroke-width="1.300"/><path d="M14 750.500H16.500M13 752.700H16.500M14 754.900H16.500M13 757.100H16.500M14 759.300H16.500M13 761.500H16.500M14 763.500H16.500M19.500 754V756.500M21.300 753V756.500M23.100 754V756.500M24.700 753V756.500" stroke="#1e1e1e" stroke-width="0.900"/><g transform="translate(18 785) rotate(-38)"><rect x="-13.200" y="-4.800" width="26.400" height="9.600" rx="2.800" fill="none" stroke="#1e1e1e" stroke-width="1.500"/><path d="M-8 -4.800V-1.300M-3.500 -4.800V-2M1 -4.800V-1.300M5.500 -4.800V-2" stroke="#1e1e1e" stroke-width="1.300"/></g><path d="M9.700 805.100L27.800 813.300M7.900 809.300L26 817.500M6 813L23.800 821.600" stroke="#4a4a4a" stroke-width="1.100"/><path d="M6 831.500H30" stroke="#d0d0dc" stroke-width="1"/><path d="M7.500 846H10.500M7.500 851H13M7.500 856.5H16.500" stroke="#1e1e1e" stroke-width="1.800"/><path d="M22 859V843.5M18.300 847.5L22 843.2L25.700 847.5" fill="none" stroke="#1e1e1e" stroke-width="1.600"/><path d="M7.500 872.5H10.500M7.500 877.5H13M7.500 883.0H16.500" stroke="#1e1e1e" stroke-width="1.800"/><path d="M22 869.5V885.0M18.300 881.0L22 885.3L25.700 881.0" fill="none" stroke="#1e1e1e" stroke-width="1.600"/><path d="M5.500 897H13V905Z" fill="#1e1e1e"/></svg>
<div style="left:36px;top:238px;width:991px;height:686px;background:#ffffff;"></div>
<svg class="a" style="left:36px;top:238px;overflow:hidden" width="991" height="686" viewBox="36 238 991 686"><path d="M58.50 238V898" stroke="#f3e2e7" stroke-width="1"/><path d="M111.50 238V898" stroke="#f3e2e7" stroke-width="1"/><path d="M164.50 238V898" stroke="#f3e2e7" stroke-width="1"/><path d="M217.50 238V898" stroke="#f3e2e7" stroke-width="1"/><path d="M269.50 238V898" stroke="#f3e2e7" stroke-width="1"/><path d="M322.50 238V898" stroke="#f3e2e7" stroke-width="1"/><path d="M375.50 238V898" stroke="#f3e2e7" stroke-width="1"/><path d="M428.50 238V898" stroke="#f3e2e7" stroke-width="1"/><path d="M481.50 238V898" stroke="#f3e2e7" stroke-width="1"/><path d="M534.50 238V898" stroke="#f3e2e7" stroke-width="1"/><path d="M587.50 238V898" stroke="#f3e2e7" stroke-width="1"/><path d="M640.50 238V898" stroke="#f3e2e7" stroke-width="1"/><path d="M692.50 238V898" stroke="#f3e2e7" stroke-width="1"/><path d="M745.50 238V898" stroke="#f3e2e7" stroke-width="1"/><path d="M798.50 238V898" stroke="#f3e2e7" stroke-width="1"/><path d="M36 250.50H951" stroke="#f3e2e7" stroke-width="1"/><path d="M36 357.50H951" stroke="#f3e2e7" stroke-width="1"/><path d="M36 463.50H951" stroke="#f3e2e7" stroke-width="1"/><path d="M36 570.50H951" stroke="#f3e2e7" stroke-width="1"/><path d="M36 676.50H951" stroke="#f3e2e7" stroke-width="1"/><path d="M36 783.50H951" stroke="#f3e2e7" stroke-width="1"/><path d="M36 889.50H951" stroke="#f3e2e7" stroke-width="1"/><g fill="#1c1c1c"><text x="35.53" y="589.40" font-size="9.33">30</text><text x="35.53" y="600.05" font-size="9.33">255</text><rect x="10.03" y="603.15" width="44.800" height="10.100" fill="#fff" stroke="#000" stroke-width="1"/><text x="52.63" y="610.70" font-size="9.33" font-weight="bold" text-anchor="end">291</text><text x="35.53" y="621.35" font-size="9.33">109</text><text x="35.53" y="632.00" font-size="9.33">25</text><text x="35.53" y="642.65" font-size="9.33">115</text><text x="35.53" y="653.30" font-size="9.33">108</text><text x="35.53" y="663.95" font-size="9.33">84</text><text x="35.53" y="674.60" font-size="9.33">37</text><text x="35.53" y="685.25" font-size="9.33">0</text><rect x="58.90" y="570.00" width="2.700" height="42.60" fill="#3bada2"/><rect x="62.40" y="559.35" width="1.600" height="106.50" fill="#808080"/><text x="80.70" y="568.10" font-size="9.33" text-anchor="end">0</text><text x="88.40" y="568.10" font-size="9.33">3</text><rect x="63.20" y="571.00" width="1.60" height="10.650" fill="#c8f2c8" stroke="#868686" stroke-width="0.900"/><text x="80.70" y="578.75" font-size="9.33" text-anchor="end">35</text><text x="88.40" y="578.75" font-size="9.33">99</text><rect x="63.20" y="581.65" width="3.15" height="10.650" fill="#ffb8b8" stroke="#868686" stroke-width="0.900"/><text x="80.70" y="589.40" font-size="9.33" text-anchor="end">101</text><text x="88.40" y="589.40" font-size="9.33">83</text><rect x="63.20" y="592.30" width="4.34" height="10.650" fill="#8fe68f" stroke="#868686" stroke-width="0.900"/><text x="80.70" y="600.05" font-size="9.33" text-anchor="end">77</text><text x="88.40" y="600.05" font-size="9.33">143</text><rect x="63.20" y="602.95" width="9.24" height="10.650" fill="#8fe68f" stroke="#868686" stroke-width="0.900"/><text x="80.70" y="610.70" font-size="9.33" text-anchor="end">172</text><text x="88.40" y="610.70" font-size="9.33">197</text><rect x="63.20" y="613.60" width="3.19" height="10.650" fill="#ffb8b8" stroke="#868686" stroke-width="0.900"/><text x="80.70" y="621.35" font-size="9.33" text-anchor="end">97</text><text x="88.40" y="621.35" font-size="9.33">88</text><rect x="62.90" y="624.45" width="44.800" height="10.100" fill="#fff"/><rect x="63.30" y="624.85" width="10.40" height="9.300" fill="#2fc52f"/><rect x="62.90" y="624.45" width="44.800" height="10.100" fill="none" stroke="#000" stroke-width="1"/><text x="63.60" y="632.00" font-size="9.33" font-weight="bold">187</text><text x="105.50" y="632.00" font-size="9.33" font-weight="bold" text-anchor="end">196</text><rect x="63.20" y="634.90" width="6.54" height="10.650" fill="#ff7c7c" stroke="#868686" stroke-width="0.900"/><text x="80.70" y="642.65" font-size="9.33" text-anchor="end">168</text><text x="88.40" y="642.65" font-size="9.33">119</text><text x="80.70" y="653.30" font-size="9.33" text-anchor="end">60</text><text x="88.40" y="653.30" font-size="9.33">10</text><text x="80.70" y="663.95" font-size="9.33" text-anchor="end">2</text><text x="88.40" y="663.95" font-size="9.33">0</text><rect x="111.77" y="527.40" width="2.700" height="42.60" fill="#3bada2"/><rect x="115.27" y="516.75" width="1.600" height="85.20" fill="#808080"/><text x="133.57" y="525.50" font-size="9.33" text-anchor="end">0</text><text x="141.27" y="525.50" font-size="9.33">25</text><rect x="116.07" y="528.40" width="13.71" height="10.650" fill="#8fe68f" stroke="#868686" stroke-width="0.900"/><text x="133.57" y="536.15" font-size="9.33" text-anchor="end">212</text><text x="141.27" y="536.15" font-size="9.33">293</text><rect x="115.77" y="539.25" width="44.800" height="10.100" fill="#fff"/><rect x="116.17" y="539.65" width="19.58" height="9.300" fill="#ff0000"/><rect x="115.77" y="539.25" width="44.800" height="10.100" fill="none" stroke="#000" stroke-width="1"/><text x="116.47" y="546.80" font-size="9.33" font-weight="bold">357</text><text x="158.37" y="546.80" font-size="9.33" font-weight="bold" text-anchor="end">305</text><rect x="116.07" y="549.70" width="13.85" height="10.650" fill="#ff7c7c" stroke="#868686" stroke-width="0.900"/><text x="133.57" y="557.45" font-size="9.33" text-anchor="end">273</text><text x="141.27" y="557.45" font-size="9.33">236</text><rect x="116.07" y="560.35" width="11.67" height="10.650" fill="#ff7c7c" stroke="#868686" stroke-width="0.900"/><text x="133.57" y="568.10" font-size="9.33" text-anchor="end">270</text><text x="141.27" y="568.10" font-size="9.33">173</text><rect x="116.07" y="571.00" width="1.60" height="10.650" fill="#ffb8b8" stroke="#868686" stroke-width="0.900"/><text x="133.57" y="578.75" font-size="9.33" text-anchor="end">69</text><text x="141.27" y="578.75" font-size="9.33">26</text><text x="133.57" y="589.40" font-size="9.33" text-anchor="end">41</text><text x="141.27" y="589.40" font-size="9.33">15</text><text x="133.57" y="600.05" font-size="9.33" text-anchor="end">6</text><text x="141.27" y="600.05" font-size="9.33">0</text><rect x="164.64" y="538.05" width="2.700" height="21.30" fill="#f0625f"/><rect x="168.14" y="463.50" width="1.600" height="95.85" fill="#808080"/><text x="186.44" y="472.25" font-size="9.33" text-anchor="end">0</text><text x="194.14" y="472.25" font-size="9.33">9</text><rect x="168.94" y="475.15" width="1.60" height="10.650" fill="#c8f2c8" stroke="#868686" stroke-width="0.900"/><text x="186.44" y="482.90" font-size="9.33" text-anchor="end">58</text><text x="194.14" y="482.90" font-size="9.33">77</text><rect x="168.94" y="485.80" width="9.57" height="10.650" fill="#8fe68f" stroke="#868686" stroke-width="0.900"/><text x="186.44" y="493.55" font-size="9.33" text-anchor="end">158</text><text x="194.14" y="493.55" font-size="9.33">221</text><rect x="168.64" y="496.65" width="44.800" height="10.100" fill="#fff"/><rect x="169.04" y="497.05" width="12.51" height="9.300" fill="#2fc52f"/><rect x="168.64" y="496.65" width="44.800" height="10.100" fill="none" stroke="#000" stroke-width="1"/><text x="169.34" y="504.20" font-size="9.33" font-weight="bold">211</text><text x="211.24" y="504.20" font-size="9.33" font-weight="bold" text-anchor="end">236</text><rect x="168.94" y="507.10" width="3.91" height="10.650" fill="#c8f2c8" stroke="#868686" stroke-width="0.900"/><text x="186.44" y="514.85" font-size="9.33" text-anchor="end">87</text><text x="194.14" y="514.85" font-size="9.33">120</text><rect x="168.94" y="517.75" width="5.19" height="10.650" fill="#ff7c7c" stroke="#868686" stroke-width="0.900"/><text x="186.44" y="525.50" font-size="9.33" text-anchor="end">135</text><text x="194.14" y="525.50" font-size="9.33">111</text><rect x="168.94" y="528.40" width="9.14" height="10.650" fill="#ff7c7c" stroke="#868686" stroke-width="0.900"/><text x="186.44" y="536.15" font-size="9.33" text-anchor="end">217</text><text x="194.14" y="536.15" font-size="9.33">149</text><rect x="168.94" y="539.05" width="1.60" height="10.650" fill="#ffb8b8" stroke="#868686" stroke-width="0.900"/><text x="186.44" y="546.80" font-size="9.33" text-anchor="end">85</text><text x="194.14" y="546.80" font-size="9.33">30</text><text x="186.44" y="557.45" font-size="9.33" text-anchor="end">12</text><text x="194.14" y="557.45" font-size="9.33">0</text><rect x="217.51" y="548.70" width="2.700" height="149.10" fill="#f0625f"/><rect x="221.01" y="538.05" width="1.600" height="170.40" fill="#808080"/><text x="239.31" y="546.80" font-size="9.33" text-anchor="end">37</text><text x="247.01" y="546.80" font-size="9.33">25</text><text x="239.31" y="557.45" font-size="9.33" text-anchor="end">37</text><text x="247.01" y="557.45" font-size="9.33">0</text><text x="239.31" y="568.10" font-size="9.33" text-anchor="end">32</text><text x="247.01" y="568.10" font-size="9.33">23</text><rect x="221.81" y="571.00" width="7.10" height="10.650" fill="#8fe68f" stroke="#868686" stroke-width="0.900"/><text x="239.31" y="578.75" font-size="9.33" text-anchor="end">138</text><text x="247.01" y="578.75" font-size="9.33">166</text><rect x="221.81" y="581.65" width="4.93" height="10.650" fill="#ffb8b8" stroke="#868686" stroke-width="0.900"/><text x="239.31" y="589.40" font-size="9.33" text-anchor="end">175</text><text x="247.01" y="589.40" font-size="9.33">63</text><rect x="221.81" y="592.30" width="5.95" height="10.650" fill="#ff7c7c" stroke="#868686" stroke-width="0.900"/><text x="239.31" y="600.05" font-size="9.33" text-anchor="end">140</text><text x="247.01" y="600.05" font-size="9.33">129</text><rect x="221.81" y="602.95" width="3.55" height="10.650" fill="#ffb8b8" stroke="#868686" stroke-width="0.900"/><text x="239.31" y="610.70" font-size="9.33" text-anchor="end">109</text><text x="247.01" y="610.70" font-size="9.33">87</text><rect x="221.81" y="613.60" width="2.63" height="10.650" fill="#ffb8b8" stroke="#868686" stroke-width="0.900"/><text x="239.31" y="621.35" font-size="9.33" text-anchor="end">109</text><text x="247.01" y="621.35" font-size="9.33">59</text><text x="239.31" y="632.00" font-size="9.33" text-anchor="end">83</text><text x="247.01" y="632.00" font-size="9.33">8</text><text x="239.31" y="642.65" font-size="9.33" text-anchor="end">49</text><text x="247.01" y="642.65" font-size="9.33">35</text><rect x="221.81" y="645.55" width="4.90" height="10.650" fill="#c8f2c8" stroke="#868686" stroke-width="0.900"/><text x="239.31" y="653.30" font-size="9.33" text-anchor="end">118</text><text x="247.01" y="653.30" font-size="9.33">119</text><rect x="221.51" y="656.40" width="44.800" height="10.100" fill="#fff"/><rect x="221.91" y="656.80" width="13.49" height="9.300" fill="#ff0000"/><rect x="221.51" y="656.40" width="44.800" height="10.100" fill="none" stroke="#000" stroke-width="1"/><text x="222.21" y="663.95" font-size="9.33" font-weight="bold">242</text><text x="264.11" y="663.95" font-size="9.33" font-weight="bold" text-anchor="end">235</text><rect x="221.81" y="666.85" width="1.60" height="10.650" fill="#ffb8b8" stroke="#868686" stroke-width="0.900"/><text x="239.31" y="674.60" font-size="9.33" text-anchor="end">97</text><text x="247.01" y="674.60" font-size="9.33">13</text><text x="239.31" y="685.25" font-size="9.33" text-anchor="end">62</text><text x="247.01" y="685.25" font-size="9.33">28</text><text x="239.31" y="695.90" font-size="9.33" text-anchor="end">29</text><text x="247.01" y="695.90" font-size="9.33">37</text><text x="239.31" y="706.55" font-size="9.33" text-anchor="end">20</text><text x="247.01" y="706.55" font-size="9.33">0</text><rect x="270.38" y="687.15" width="2.700" height="21.30" fill="#f0625f"/><rect x="273.88" y="633.90" width="1.600" height="74.55" fill="#808080"/><text x="292.18" y="642.65" font-size="9.33" text-anchor="end">0</text><text x="299.88" y="642.65" font-size="9.33">3</text><rect x="274.68" y="645.55" width="2.96" height="10.650" fill="#c8f2c8" stroke="#868686" stroke-width="0.900"/><text x="292.18" y="653.30" font-size="9.33" text-anchor="end">84</text><text x="299.88" y="653.30" font-size="9.33">94</text><rect x="274.68" y="656.20" width="7.66" height="10.650" fill="#ff7c7c" stroke="#868686" stroke-width="0.900"/><text x="292.18" y="663.95" font-size="9.33" text-anchor="end">182</text><text x="299.88" y="663.95" font-size="9.33">139</text><rect x="274.68" y="666.85" width="7.69" height="10.650" fill="#ff7c7c" stroke="#868686" stroke-width="0.900"/><text x="292.18" y="674.60" font-size="9.33" text-anchor="end">166</text><text x="299.88" y="674.60" font-size="9.33">156</text><rect x="274.38" y="677.70" width="44.800" height="10.100" fill="#fff"/><rect x="274.78" y="678.10" width="16.36" height="9.300" fill="#ff0000"/><rect x="274.38" y="677.70" width="44.800" height="10.100" fill="none" stroke="#000" stroke-width="1"/><text x="275.08" y="685.25" font-size="9.33" font-weight="bold">283</text><text x="316.98" y="685.25" font-size="9.33" font-weight="bold" text-anchor="end">281</text><rect x="274.68" y="688.15" width="4.31" height="10.650" fill="#ffb8b8" stroke="#868686" stroke-width="0.900"/><text x="292.18" y="695.90" font-size="9.33" text-anchor="end">160</text><text x="299.88" y="695.90" font-size="9.33">59</text><rect x="274.68" y="698.80" width="1.60" height="10.650" fill="#ffb8b8" stroke="#868686" stroke-width="0.900"/><text x="292.18" y="706.55" font-size="9.33" text-anchor="end">64</text><text x="299.88" y="706.55" font-size="9.33">49</text><rect x="323.25" y="697.80" width="2.700" height="85.20" fill="#f0625f"/><rect x="326.75" y="687.15" width="1.600" height="117.15" fill="#808080"/><text x="345.05" y="695.90" font-size="9.33" text-anchor="end">0</text><text x="352.75" y="695.90" font-size="9.33">3</text><text x="345.05" y="706.55" font-size="9.33" text-anchor="end">20</text><text x="352.75" y="706.55" font-size="9.33">43</text><rect x="327.55" y="709.45" width="1.67" height="10.650" fill="#ffb8b8" stroke="#868686" stroke-width="0.900"/><text x="345.05" y="717.20" font-size="9.33" text-anchor="end">125</text><text x="352.75" y="717.20" font-size="9.33">14</text><rect x="327.55" y="720.10" width="7.76" height="10.650" fill="#ff7c7c" stroke="#868686" stroke-width="0.900"/><text x="345.05" y="727.85" font-size="9.33" text-anchor="end">164</text><text x="352.75" y="727.85" font-size="9.33">160</text><rect x="327.25" y="730.95" width="44.800" height="10.100" fill="#fff"/><rect x="327.65" y="731.35" width="16.98" height="9.300" fill="#ff0000"/><rect x="327.25" y="730.95" width="44.800" height="10.100" fill="none" stroke="#000" stroke-width="1"/><text x="327.95" y="738.50" font-size="9.33" font-weight="bold">339</text><text x="369.85" y="738.50" font-size="9.33" font-weight="bold" text-anchor="end">244</text><rect x="327.55" y="741.40" width="13.35" height="10.650" fill="#ff7c7c" stroke="#868686" stroke-width="0.900"/><text x="345.05" y="749.15" font-size="9.33" text-anchor="end">308</text><text x="352.75" y="749.15" font-size="9.33">186</text><rect x="327.55" y="752.05" width="8.94" height="10.650" fill="#ff7c7c" stroke="#868686" stroke-width="0.900"/><text x="345.05" y="759.80" font-size="9.33" text-anchor="end">199</text><text x="352.75" y="759.80" font-size="9.33">161</text><rect x="327.55" y="762.70" width="11.15" height="10.650" fill="#ff7c7c" stroke="#868686" stroke-width="0.900"/><text x="345.05" y="770.45" font-size="9.33" text-anchor="end">216</text><text x="352.75" y="770.45" font-size="9.33">211</text><rect x="327.55" y="773.35" width="10.03" height="10.650" fill="#ff7c7c" stroke="#868686" stroke-width="0.900"/><text x="345.05" y="781.10" font-size="9.33" text-anchor="end">239</text><text x="352.75" y="781.10" font-size="9.33">154</text><rect x="327.55" y="784.00" width="6.38" height="10.650" fill="#ffb8b8" stroke="#868686" stroke-width="0.900"/><text x="345.05" y="791.75" font-size="9.33" text-anchor="end">180</text><text x="352.75" y="791.75" font-size="9.33">102</text><rect x="327.55" y="794.65" width="4.54" height="10.650" fill="#ffb8b8" stroke="#868686" stroke-width="0.900"/><text x="345.05" y="802.40" font-size="9.33" text-anchor="end">121</text><text x="352.75" y="802.40" font-size="9.33">105</text><rect x="376.12" y="740.40" width="2.700" height="42.60" fill="#3bada2"/><rect x="379.62" y="676.50" width="1.600" height="117.15" fill="#808080"/><text x="397.92" y="685.25" font-size="9.33" text-anchor="end">2</text><text x="405.62" y="685.25" font-size="9.33">11</text><rect x="380.42" y="688.15" width="1.61" height="10.650" fill="#c8f2c8" stroke="#868686" stroke-width="0.900"/><text x="397.92" y="695.90" font-size="9.33" text-anchor="end">59</text><text x="405.62" y="695.90" font-size="9.33">78</text><rect x="380.42" y="698.80" width="1.60" height="10.650" fill="#c8f2c8" stroke="#868686" stroke-width="0.900"/><text x="397.92" y="706.55" font-size="9.33" text-anchor="end">57</text><text x="405.62" y="706.55" font-size="9.33">60</text><rect x="380.42" y="709.45" width="11.41" height="10.650" fill="#8fe68f" stroke="#868686" stroke-width="0.900"/><text x="397.92" y="717.20" font-size="9.33" text-anchor="end">195</text><text x="405.62" y="717.20" font-size="9.33">240</text><rect x="380.42" y="720.10" width="14.24" height="10.650" fill="#ff7c7c" stroke="#868686" stroke-width="0.900"/><text x="397.92" y="727.85" font-size="9.33" text-anchor="end">312</text><text x="405.62" y="727.85" font-size="9.33">209</text><rect x="380.12" y="730.95" width="44.800" height="10.100" fill="#fff"/><rect x="380.52" y="731.35" width="19.09" height="9.300" fill="#ff0000"/><rect x="380.12" y="730.95" width="44.800" height="10.100" fill="none" stroke="#000" stroke-width="1"/><text x="380.82" y="738.50" font-size="9.33" font-weight="bold">386</text><text x="422.72" y="738.50" font-size="9.33" font-weight="bold" text-anchor="end">261</text><rect x="380.42" y="741.40" width="12.17" height="10.650" fill="#ff7c7c" stroke="#868686" stroke-width="0.900"/><text x="397.92" y="749.15" font-size="9.33" text-anchor="end">247</text><text x="405.62" y="749.15" font-size="9.33">211</text><rect x="380.42" y="752.05" width="12.27" height="10.650" fill="#8fe68f" stroke="#868686" stroke-width="0.900"/><text x="397.92" y="759.80" font-size="9.33" text-anchor="end">213</text><text x="405.62" y="759.80" font-size="9.33">248</text><rect x="380.42" y="762.70" width="1.60" height="10.650" fill="#ffb8b8" stroke="#868686" stroke-width="0.900"/><text x="397.92" y="770.45" font-size="9.33" text-anchor="end">66</text><text x="405.62" y="770.45" font-size="9.33">65</text><text x="397.92" y="781.10" font-size="9.33" text-anchor="end">52</text><text x="405.62" y="781.10" font-size="9.33">32</text><text x="397.92" y="791.75" font-size="9.33" text-anchor="end">4</text><text x="405.62" y="791.75" font-size="9.33">0</text><rect x="428.99" y="559.35" width="2.700" height="181.05" fill="#3bada2"/><rect x="432.49" y="538.05" width="1.600" height="266.25" fill="#808080"/><text x="450.79" y="546.80" font-size="9.33" text-anchor="end">6</text><text x="458.49" y="546.80" font-size="9.33">40</text><text x="450.79" y="557.45" font-size="9.33" text-anchor="end">48</text><text x="458.49" y="557.45" font-size="9.33">41</text><text x="450.79" y="568.10" font-size="9.33" text-anchor="end">39</text><text x="458.49" y="568.10" font-size="9.33">48</text><rect x="433.29" y="571.00" width="1.90" height="10.650" fill="#c8f2c8" stroke="#868686" stroke-width="0.900"/><text x="450.79" y="578.75" font-size="9.33" text-anchor="end">42</text><text x="458.49" y="578.75" font-size="9.33">104</text><rect x="433.29" y="581.65" width="7.69" height="10.650" fill="#c8f2c8" stroke="#868686" stroke-width="0.900"/><text x="450.79" y="589.40" font-size="9.33" text-anchor="end">117</text><text x="458.49" y="589.40" font-size="9.33">205</text><rect x="433.29" y="592.30" width="12.43" height="10.650" fill="#ff7c7c" stroke="#868686" stroke-width="0.900"/><text x="450.79" y="600.05" font-size="9.33" text-anchor="end">244</text><text x="458.49" y="600.05" font-size="9.33">222</text><rect x="433.29" y="602.95" width="16.28" height="10.650" fill="#8fe68f" stroke="#868686" stroke-width="0.900"/><text x="450.79" y="610.70" font-size="9.33" text-anchor="end">264</text><text x="458.49" y="610.70" font-size="9.33">319</text><rect x="433.29" y="613.60" width="13.91" height="10.650" fill="#8fe68f" stroke="#868686" stroke-width="0.900"/><text x="450.79" y="621.35" font-size="9.33" text-anchor="end">252</text><text x="458.49" y="621.35" font-size="9.33">259</text><rect x="433.29" y="624.25" width="16.38" height="10.650" fill="#ff7c7c" stroke="#868686" stroke-width="0.900"/><text x="450.79" y="632.00" font-size="9.33" text-anchor="end">313</text><text x="458.49" y="632.00" font-size="9.33">273</text><rect x="432.99" y="635.10" width="44.800" height="10.100" fill="#fff"/><rect x="433.39" y="635.50" width="27.87" height="9.300" fill="#ff0000"/><rect x="432.99" y="635.10" width="44.800" height="10.100" fill="none" stroke="#000" stroke-width="1"/><text x="433.69" y="642.65" font-size="9.33" font-weight="bold">460</text><text x="475.59" y="642.65" font-size="9.33" font-weight="bold" text-anchor="end">454</text><rect x="433.29" y="645.55" width="10.98" height="10.650" fill="#ffb8b8" stroke="#868686" stroke-width="0.900"/><text x="450.79" y="653.30" font-size="9.33" text-anchor="end">229</text><text x="458.49" y="653.30" font-size="9.33">193</text><rect x="433.29" y="656.20" width="9.37" height="10.650" fill="#ffb8b8" stroke="#868686" stroke-width="0.900"/><text x="450.79" y="663.95" font-size="9.33" text-anchor="end">225</text><text x="458.49" y="663.95" font-size="9.33">148</text><rect x="433.29" y="666.85" width="2.63" height="10.650" fill="#ffb8b8" stroke="#868686" stroke-width="0.900"/><text x="450.79" y="674.60" font-size="9.33" text-anchor="end">90</text><text x="458.49" y="674.60" font-size="9.33">78</text><rect x="433.29" y="677.50" width="2.40" height="10.650" fill="#ffb8b8" stroke="#868686" stroke-width="0.900"/><text x="450.79" y="685.25" font-size="9.33" text-anchor="end">85</text><text x="458.49" y="685.25" font-size="9.33">76</text><rect x="433.29" y="688.15" width="1.60" height="10.650" fill="#ffb8b8" stroke="#868686" stroke-width="0.900"/><text x="450.79" y="695.90" font-size="9.33" text-anchor="end">73</text><text x="458.49" y="695.90" font-size="9.33">54</text><rect x="433.29" y="698.80" width="2.23" height="10.650" fill="#c8f2c8" stroke="#868686" stroke-width="0.900"/><text x="450.79" y="706.55" font-size="9.33" text-anchor="end">65</text><text x="458.49" y="706.55" font-size="9.33">91</text><rect x="433.29" y="709.45" width="4.96" height="10.650" fill="#c8f2c8" stroke="#868686" stroke-width="0.900"/><text x="450.79" y="717.20" font-size="9.33" text-anchor="end">85</text><text x="458.49" y="717.20" font-size="9.33">154</text><rect x="433.29" y="720.10" width="10.69" height="10.650" fill="#c8f2c8" stroke="#868686" stroke-width="0.900"/><text x="450.79" y="727.85" font-size="9.33" text-anchor="end">196</text><text x="458.49" y="727.85" font-size="9.33">217</text><rect x="433.29" y="730.75" width="7.83" height="10.650" fill="#c8f2c8" stroke="#868686" stroke-width="0.900"/><text x="450.79" y="738.50" font-size="9.33" text-anchor="end">152</text><text x="458.49" y="738.50" font-size="9.33">174</text><rect x="433.29" y="741.40" width="6.41" height="10.650" fill="#c8f2c8" stroke="#868686" stroke-width="0.900"/><text x="450.79" y="749.15" font-size="9.33" text-anchor="end">123</text><text x="458.49" y="749.15" font-size="9.33">160</text><rect x="433.29" y="752.05" width="9.14" height="10.650" fill="#c8f2c8" stroke="#868686" stroke-width="0.900"/><text x="450.79" y="759.80" font-size="9.33" text-anchor="end">166</text><text x="458.49" y="759.80" font-size="9.33">200</text><rect x="433.29" y="762.70" width="4.24" height="10.650" fill="#c8f2c8" stroke="#868686" stroke-width="0.900"/><text x="450.79" y="770.45" font-size="9.33" text-anchor="end">108</text><text x="458.49" y="770.45" font-size="9.33">109</text><text x="450.79" y="781.10" font-size="9.33" text-anchor="end">57</text><text x="458.49" y="781.10" font-size="9.33">30</text><text x="450.79" y="791.75" font-size="9.33" text-anchor="end">48</text><text x="458.49" y="791.75" font-size="9.33">38</text><text x="450.79" y="802.40" font-size="9.33" text-anchor="end">1</text><text x="458.49" y="802.40" font-size="9.33">0</text><rect x="481.86" y="538.05" width="2.700" height="31.95" fill="#3bada2"/><rect x="485.36" y="495.45" width="1.600" height="127.80" fill="#808080"/><text x="503.66" y="504.20" font-size="9.33" text-anchor="end">12</text><text x="511.36" y="504.20" font-size="9.33">60</text><rect x="486.16" y="507.10" width="1.60" height="10.650" fill="#c8f2c8" stroke="#868686" stroke-width="0.900"/><text x="503.66" y="514.85" font-size="9.33" text-anchor="end">13</text><text x="511.36" y="514.85" font-size="9.33">120</text><rect x="486.16" y="517.75" width="11.61" height="10.650" fill="#ffb8b8" stroke="#868686" stroke-width="0.900"/><text x="503.66" y="525.50" font-size="9.33" text-anchor="end">239</text><text x="511.36" y="525.50" font-size="9.33">202</text><rect x="486.16" y="528.40" width="6.15" height="10.650" fill="#c8f2c8" stroke="#868686" stroke-width="0.900"/><text x="503.66" y="536.15" font-size="9.33" text-anchor="end">136</text><text x="511.36" y="536.15" font-size="9.33">139</text><rect x="486.16" y="539.05" width="11.48" height="10.650" fill="#ffb8b8" stroke="#868686" stroke-width="0.900"/><text x="503.66" y="546.80" font-size="9.33" text-anchor="end">234</text><text x="511.36" y="546.80" font-size="9.33">203</text><rect x="486.16" y="549.70" width="29.37" height="10.650" fill="#ff7c7c" stroke="#868686" stroke-width="0.900"/><text x="503.66" y="557.45" font-size="9.33" text-anchor="end">561</text><text x="511.36" y="557.45" font-size="9.33">420</text><rect x="485.86" y="560.55" width="44.800" height="10.100" fill="#fff"/><rect x="486.26" y="560.95" width="39.65" height="9.300" fill="#2fc52f"/><rect x="485.86" y="560.55" width="44.800" height="10.100" fill="none" stroke="#000" stroke-width="1"/><text x="486.56" y="568.10" font-size="9.33" font-weight="bold">625</text><text x="528.46" y="568.10" font-size="9.33" font-weight="bold" text-anchor="end">647</text><rect x="486.16" y="571.00" width="28.52" height="10.650" fill="#ff7c7c" stroke="#868686" stroke-width="0.900"/><text x="503.66" y="578.75" font-size="9.33" text-anchor="end">478</text><text x="511.36" y="578.75" font-size="9.33">477</text><rect x="486.16" y="581.65" width="16.81" height="10.650" fill="#ffb8b8" stroke="#868686" stroke-width="0.900"/><text x="503.66" y="589.40" font-size="9.33" text-anchor="end">356</text><text x="511.36" y="589.40" font-size="9.33">243</text><rect x="486.16" y="592.30" width="11.25" height="10.650" fill="#ffb8b8" stroke="#868686" stroke-width="0.900"/><text x="503.66" y="600.05" font-size="9.33" text-anchor="end">239</text><text x="511.36" y="600.05" font-size="9.33">191</text><rect x="486.16" y="602.95" width="8.61" height="10.650" fill="#c8f2c8" stroke="#868686" stroke-width="0.900"/><text x="503.66" y="610.70" font-size="9.33" text-anchor="end">139</text><text x="511.36" y="610.70" font-size="9.33">211</text><rect x="486.16" y="613.60" width="1.60" height="10.650" fill="#ffb8b8" stroke="#868686" stroke-width="0.900"/><text x="503.66" y="621.35" font-size="9.33" text-anchor="end">96</text><text x="511.36" y="621.35" font-size="9.33">38</text><rect x="534.73" y="474.15" width="2.700" height="74.55" fill="#3bada2"/><rect x="538.23" y="431.55" width="1.600" height="149.10" fill="#808080"/><rect x="539.03" y="432.55" width="4.31" height="10.650" fill="#c8f2c8" stroke="#868686" stroke-width="0.900"/><text x="556.53" y="440.30" font-size="9.33" text-anchor="end">60</text><text x="564.23" y="440.30" font-size="9.33">159</text><rect x="539.03" y="443.20" width="22.96" height="10.650" fill="#8fe68f" stroke="#868686" stroke-width="0.900"/><text x="556.53" y="450.95" font-size="9.33" text-anchor="end">280</text><text x="564.23" y="450.95" font-size="9.33">506</text><rect x="539.03" y="453.85" width="25.03" height="10.650" fill="#8fe68f" stroke="#868686" stroke-width="0.900"/><text x="556.53" y="461.60" font-size="9.33" text-anchor="end">393</text><text x="564.23" y="461.60" font-size="9.33">456</text><rect x="539.03" y="464.50" width="38.98" height="10.650" fill="#8fe68f" stroke="#868686" stroke-width="0.900"/><text x="556.53" y="472.25" font-size="9.33" text-anchor="end">589</text><text x="564.23" y="472.25" font-size="9.33">684</text><rect x="538.73" y="475.35" width="44.800" height="10.100" fill="#fff"/><rect x="539.13" y="475.75" width="44.35" height="9.300" fill="#ff0000"/><rect x="538.73" y="475.35" width="44.800" height="10.100" fill="none" stroke="#000" stroke-width="1"/><text x="539.43" y="482.90" font-size="9.33" font-weight="bold">798</text><text x="581.33" y="482.90" font-size="9.33" font-weight="bold" text-anchor="end">617</text><rect x="539.03" y="485.80" width="26.41" height="10.650" fill="#ff7c7c" stroke="#868686" stroke-width="0.900"/><text x="556.53" y="493.55" font-size="9.33" text-anchor="end">475</text><text x="564.23" y="493.55" font-size="9.33">416</text><rect x="539.03" y="496.45" width="15.85" height="10.650" fill="#ffb8b8" stroke="#868686" stroke-width="0.900"/><text x="556.53" y="504.20" font-size="9.33" text-anchor="end">342</text><text x="564.23" y="504.20" font-size="9.33">228</text><rect x="539.03" y="507.10" width="11.18" height="10.650" fill="#ffb8b8" stroke="#868686" stroke-width="0.900"/><text x="556.53" y="514.85" font-size="9.33" text-anchor="end">228</text><text x="564.23" y="514.85" font-size="9.33">200</text><rect x="539.03" y="517.75" width="11.18" height="10.650" fill="#c8f2c8" stroke="#868686" stroke-width="0.900"/><text x="556.53" y="525.50" font-size="9.33" text-anchor="end">181</text><text x="564.23" y="525.50" font-size="9.33">247</text><rect x="539.03" y="528.40" width="22.20" height="10.650" fill="#8fe68f" stroke="#868686" stroke-width="0.900"/><text x="556.53" y="536.15" font-size="9.33" text-anchor="end">308</text><text x="564.23" y="536.15" font-size="9.33">455</text><rect x="539.03" y="539.05" width="6.08" height="10.650" fill="#ffb8b8" stroke="#868686" stroke-width="0.900"/><text x="556.53" y="546.80" font-size="9.33" text-anchor="end">149</text><text x="564.23" y="546.80" font-size="9.33">124</text><text x="556.53" y="557.45" font-size="9.33" text-anchor="end">8</text><text x="564.23" y="557.45" font-size="9.33">13</text><text x="556.53" y="568.10" font-size="9.33" text-anchor="end">6</text><text x="564.23" y="568.10" font-size="9.33">3</text><text x="556.53" y="578.75" font-size="9.33" text-anchor="end">1</text><text x="564.23" y="578.75" font-size="9.33">0</text><rect x="587.60" y="463.50" width="2.700" height="74.55" fill="#f0625f"/><rect x="591.10" y="378.30" width="1.600" height="202.35" fill="#808080"/><text x="609.40" y="387.05" font-size="9.33" text-anchor="end">0</text><text x="617.10" y="387.05" font-size="9.33">53</text><rect x="591.90" y="389.95" width="7.07" height="10.650" fill="#c8f2c8" stroke="#868686" stroke-width="0.900"/><text x="609.40" y="397.70" font-size="9.33" text-anchor="end">144</text><text x="617.10" y="397.70" font-size="9.33">159</text><rect x="591.90" y="400.60" width="10.95" height="10.650" fill="#8fe68f" stroke="#868686" stroke-width="0.900"/><text x="609.40" y="408.35" font-size="9.33" text-anchor="end">163</text><text x="617.10" y="408.35" font-size="9.33">258</text><rect x="591.90" y="411.25" width="7.53" height="10.650" fill="#ffb8b8" stroke="#868686" stroke-width="0.900"/><text x="609.40" y="419.00" font-size="9.33" text-anchor="end">177</text><text x="617.10" y="419.00" font-size="9.33">140</text><rect x="591.90" y="421.90" width="2.43" height="10.650" fill="#c8f2c8" stroke="#868686" stroke-width="0.900"/><text x="609.40" y="429.65" font-size="9.33" text-anchor="end">76</text><text x="617.10" y="429.65" font-size="9.33">86</text><rect x="591.90" y="432.55" width="1.60" height="10.650" fill="#ffb8b8" stroke="#868686" stroke-width="0.900"/><text x="609.40" y="440.30" font-size="9.33" text-anchor="end">91</text><text x="617.10" y="440.30" font-size="9.33">36</text><rect x="591.90" y="443.20" width="2.73" height="10.650" fill="#c8f2c8" stroke="#868686" stroke-width="0.900"/><text x="609.40" y="450.95" font-size="9.33" text-anchor="end">77</text><text x="617.10" y="450.95" font-size="9.33">94</text><rect x="591.90" y="453.85" width="1.60" height="10.650" fill="#c8f2c8" stroke="#868686" stroke-width="0.900"/><text x="609.40" y="461.60" font-size="9.33" text-anchor="end">50</text><text x="617.10" y="461.60" font-size="9.33">75</text><rect x="591.90" y="464.50" width="2.27" height="10.650" fill="#c8f2c8" stroke="#868686" stroke-width="0.900"/><text x="609.40" y="472.25" font-size="9.33" text-anchor="end">51</text><text x="617.10" y="472.25" font-size="9.33">106</text><rect x="591.90" y="475.15" width="2.00" height="10.650" fill="#ffb8b8" stroke="#868686" stroke-width="0.900"/><text x="609.40" y="482.90" font-size="9.33" text-anchor="end">86</text><text x="617.10" y="482.90" font-size="9.33">63</text><rect x="591.90" y="485.80" width="4.86" height="10.650" fill="#c8f2c8" stroke="#868686" stroke-width="0.900"/><text x="609.40" y="493.55" font-size="9.33" text-anchor="end">94</text><text x="617.10" y="493.55" font-size="9.33">142</text><rect x="591.90" y="496.45" width="7.00" height="10.650" fill="#ffb8b8" stroke="#868686" stroke-width="0.900"/><text x="609.40" y="504.20" font-size="9.33" text-anchor="end">156</text><text x="617.10" y="504.20" font-size="9.33">145</text><rect x="591.90" y="507.10" width="20.39" height="10.650" fill="#8fe68f" stroke="#868686" stroke-width="0.900"/><text x="609.40" y="514.85" font-size="9.33" text-anchor="end">304</text><text x="617.10" y="514.85" font-size="9.33">404</text><rect x="591.60" y="517.95" width="44.800" height="10.100" fill="#fff"/><rect x="592.00" y="518.35" width="24.22" height="9.300" fill="#ff0000"/><rect x="591.60" y="517.95" width="44.800" height="10.100" fill="none" stroke="#000" stroke-width="1"/><text x="592.30" y="525.50" font-size="9.33" font-weight="bold">430</text><text x="634.20" y="525.50" font-size="9.33" font-weight="bold" text-anchor="end">373</text><rect x="591.90" y="528.40" width="12.27" height="10.650" fill="#ff7c7c" stroke="#868686" stroke-width="0.900"/><text x="609.40" y="536.15" font-size="9.33" text-anchor="end">245</text><text x="617.10" y="536.15" font-size="9.33">216</text><rect x="591.90" y="539.05" width="11.35" height="10.650" fill="#ff7c7c" stroke="#868686" stroke-width="0.900"/><text x="609.40" y="546.80" font-size="9.33" text-anchor="end">278</text><text x="617.10" y="546.80" font-size="9.33">155</text><rect x="591.90" y="549.70" width="4.93" height="10.650" fill="#ffb8b8" stroke="#868686" stroke-width="0.900"/><text x="609.40" y="557.45" font-size="9.33" text-anchor="end">138</text><text x="617.10" y="557.45" font-size="9.33">100</text><text x="609.40" y="568.10" font-size="9.33" text-anchor="end">77</text><text x="617.10" y="568.10" font-size="9.33">0</text><text x="609.40" y="578.75" font-size="9.33" text-anchor="end">41</text><text x="617.10" y="578.75" font-size="9.33">0</text><rect x="640.47" y="431.55" width="2.700" height="106.50" fill="#3bada2"/><rect x="643.97" y="410.25" width="1.600" height="181.05" fill="#808080"/><text x="662.27" y="419.00" font-size="9.33" text-anchor="end">0</text><text x="669.97" y="419.00" font-size="9.33">2</text><rect x="644.77" y="421.90" width="1.60" height="10.650" fill="#c8f2c8" stroke="#868686" stroke-width="0.900"/><text x="662.27" y="429.65" font-size="9.33" text-anchor="end">58</text><text x="669.97" y="429.65" font-size="9.33">62</text><rect x="644.47" y="432.75" width="44.800" height="10.100" fill="#fff"/><rect x="644.87" y="433.15" width="11.52" height="9.300" fill="#2fc52f"/><rect x="644.47" y="432.75" width="44.800" height="10.100" fill="none" stroke="#000" stroke-width="1"/><text x="645.17" y="440.30" font-size="9.33" font-weight="bold">165</text><text x="687.07" y="440.30" font-size="9.33" font-weight="bold" text-anchor="end">252</text><rect x="644.77" y="443.20" width="5.95" height="10.650" fill="#ff7c7c" stroke="#868686" stroke-width="0.900"/><text x="662.27" y="450.95" font-size="9.33" text-anchor="end">146</text><text x="669.97" y="450.95" font-size="9.33">123</text><rect x="644.77" y="453.85" width="4.93" height="10.650" fill="#ff7c7c" stroke="#868686" stroke-width="0.900"/><text x="662.27" y="461.60" font-size="9.33" text-anchor="end">123</text><text x="669.97" y="461.60" font-size="9.33">115</text><rect x="644.77" y="464.50" width="1.90" height="10.650" fill="#c8f2c8" stroke="#868686" stroke-width="0.900"/><text x="662.27" y="472.25" font-size="9.33" text-anchor="end">50</text><text x="669.97" y="472.25" font-size="9.33">96</text><rect x="644.77" y="475.15" width="7.89" height="10.650" fill="#ff7c7c" stroke="#868686" stroke-width="0.900"/><text x="662.27" y="482.90" font-size="9.33" text-anchor="end">172</text><text x="669.97" y="482.90" font-size="9.33">156</text><rect x="644.77" y="485.80" width="2.17" height="10.650" fill="#ffb8b8" stroke="#868686" stroke-width="0.900"/><text x="662.27" y="493.55" font-size="9.33" text-anchor="end">105</text><text x="669.97" y="493.55" font-size="9.33">49</text><text x="662.27" y="504.20" font-size="9.33" text-anchor="end">0</text><text x="669.97" y="504.20" font-size="9.33">31</text><rect x="644.77" y="507.10" width="5.13" height="10.650" fill="#8fe68f" stroke="#868686" stroke-width="0.900"/><text x="662.27" y="514.85" font-size="9.33" text-anchor="end">106</text><text x="669.97" y="514.85" font-size="9.33">138</text><rect x="644.77" y="517.75" width="2.53" height="10.650" fill="#c8f2c8" stroke="#868686" stroke-width="0.900"/><text x="662.27" y="525.50" font-size="9.33" text-anchor="end">63</text><text x="669.97" y="525.50" font-size="9.33">102</text><rect x="644.77" y="528.40" width="6.64" height="10.650" fill="#8fe68f" stroke="#868686" stroke-width="0.900"/><text x="662.27" y="536.15" font-size="9.33" text-anchor="end">126</text><text x="669.97" y="536.15" font-size="9.33">164</text><rect x="644.77" y="539.05" width="6.08" height="10.650" fill="#ff7c7c" stroke="#868686" stroke-width="0.900"/><text x="662.27" y="546.80" font-size="9.33" text-anchor="end">156</text><text x="669.97" y="546.80" font-size="9.33">117</text><rect x="644.77" y="549.70" width="3.38" height="10.650" fill="#c8f2c8" stroke="#868686" stroke-width="0.900"/><text x="662.27" y="557.45" font-size="9.33" text-anchor="end">86</text><text x="669.97" y="557.45" font-size="9.33">105</text><rect x="644.77" y="560.35" width="5.79" height="10.650" fill="#ff7c7c" stroke="#868686" stroke-width="0.900"/><text x="662.27" y="568.10" font-size="9.33" text-anchor="end">139</text><text x="669.97" y="568.10" font-size="9.33">125</text><rect x="644.77" y="571.00" width="3.19" height="10.650" fill="#ffb8b8" stroke="#868686" stroke-width="0.900"/><text x="662.27" y="578.75" font-size="9.33" text-anchor="end">100</text><text x="669.97" y="578.75" font-size="9.33">85</text><text x="662.27" y="589.40" font-size="9.33" text-anchor="end">41</text><text x="669.97" y="589.40" font-size="9.33">17</text><rect x="693.34" y="431.55" width="2.700" height="53.25" fill="#f0625f"/><rect x="696.84" y="420.90" width="1.600" height="95.85" fill="#808080"/><text x="715.14" y="429.65" font-size="9.33" text-anchor="end">18</text><text x="722.84" y="429.65" font-size="9.33">54</text><rect x="697.64" y="432.55" width="4.14" height="10.650" fill="#c8f2c8" stroke="#868686" stroke-width="0.900"/><text x="715.14" y="440.30" font-size="9.33" text-anchor="end">85</text><text x="722.84" y="440.30" font-size="9.33">129</text><rect x="697.64" y="443.20" width="14.31" height="10.650" fill="#8fe68f" stroke="#868686" stroke-width="0.900"/><text x="715.14" y="450.95" font-size="9.33" text-anchor="end">236</text><text x="722.84" y="450.95" font-size="9.33">287</text><rect x="697.64" y="453.85" width="15.36" height="10.650" fill="#ff7c7c" stroke="#868686" stroke-width="0.900"/><text x="715.14" y="461.60" font-size="9.33" text-anchor="end">326</text><text x="722.84" y="461.60" font-size="9.33">229</text><rect x="697.34" y="464.70" width="44.800" height="10.100" fill="#fff"/><rect x="697.74" y="465.10" width="19.81" height="9.300" fill="#ff0000"/><rect x="697.34" y="464.70" width="44.800" height="10.100" fill="none" stroke="#000" stroke-width="1"/><text x="698.04" y="472.25" font-size="9.33" font-weight="bold">361</text><text x="739.94" y="472.25" font-size="9.33" font-weight="bold" text-anchor="end">308</text><rect x="697.64" y="475.15" width="10.98" height="10.650" fill="#ff7c7c" stroke="#868686" stroke-width="0.900"/><text x="715.14" y="482.90" font-size="9.33" text-anchor="end">255</text><text x="722.84" y="482.90" font-size="9.33">167</text><rect x="697.64" y="485.80" width="4.11" height="10.650" fill="#ffb8b8" stroke="#868686" stroke-width="0.900"/><text x="715.14" y="493.55" font-size="9.33" text-anchor="end">123</text><text x="722.84" y="493.55" font-size="9.33">90</text><rect x="697.64" y="496.45" width="2.20" height="10.650" fill="#c8f2c8" stroke="#868686" stroke-width="0.900"/><text x="715.14" y="504.20" font-size="9.33" text-anchor="end">69</text><text x="722.84" y="504.20" font-size="9.33">86</text><text x="715.14" y="514.85" font-size="9.33" text-anchor="end">43</text><text x="722.84" y="514.85" font-size="9.33">0</text><rect x="746.21" y="463.50" width="2.700" height="21.30" fill="#f0625f"/><rect x="749.71" y="420.90" width="1.600" height="159.75" fill="#808080"/><text x="768.01" y="429.65" font-size="9.33" text-anchor="end">0</text><text x="775.71" y="429.65" font-size="9.33">58</text><rect x="750.51" y="432.55" width="10.16" height="10.650" fill="#8fe68f" stroke="#868686" stroke-width="0.900"/><text x="768.01" y="440.30" font-size="9.33" text-anchor="end">195</text><text x="775.71" y="440.30" font-size="9.33">202</text><rect x="750.51" y="443.20" width="12.43" height="10.650" fill="#8fe68f" stroke="#868686" stroke-width="0.900"/><text x="768.01" y="450.95" font-size="9.33" text-anchor="end">205</text><text x="775.71" y="450.95" font-size="9.33">261</text><rect x="750.51" y="453.85" width="10.26" height="10.650" fill="#ff7c7c" stroke="#868686" stroke-width="0.900"/><text x="768.01" y="461.60" font-size="9.33" text-anchor="end">209</text><text x="775.71" y="461.60" font-size="9.33">191</text><rect x="750.21" y="464.70" width="44.800" height="10.100" fill="#fff"/><rect x="750.61" y="465.10" width="16.22" height="9.300" fill="#2fc52f"/><rect x="750.21" y="464.70" width="44.800" height="10.100" fill="none" stroke="#000" stroke-width="1"/><text x="750.91" y="472.25" font-size="9.33" font-weight="bold">266</text><text x="792.81" y="472.25" font-size="9.33" font-weight="bold" text-anchor="end">294</text><rect x="750.51" y="475.15" width="11.18" height="10.650" fill="#ff7c7c" stroke="#868686" stroke-width="0.900"/><text x="768.01" y="482.90" font-size="9.33" text-anchor="end">254</text><text x="775.71" y="482.90" font-size="9.33">174</text><rect x="750.51" y="485.80" width="6.97" height="10.650" fill="#8fe68f" stroke="#868686" stroke-width="0.900"/><text x="768.01" y="493.55" font-size="9.33" text-anchor="end">101</text><text x="775.71" y="493.55" font-size="9.33">199</text><rect x="750.51" y="496.45" width="2.53" height="10.650" fill="#ffb8b8" stroke="#868686" stroke-width="0.900"/><text x="768.01" y="504.20" font-size="9.33" text-anchor="end">100</text><text x="775.71" y="504.20" font-size="9.33">65</text><rect x="750.51" y="507.10" width="7.46" height="10.650" fill="#8fe68f" stroke="#868686" stroke-width="0.900"/><text x="768.01" y="514.85" font-size="9.33" text-anchor="end">153</text><text x="775.71" y="514.85" font-size="9.33">162</text><rect x="750.51" y="517.75" width="2.03" height="10.650" fill="#ffb8b8" stroke="#868686" stroke-width="0.900"/><text x="768.01" y="525.50" font-size="9.33" text-anchor="end">109</text><text x="775.71" y="525.50" font-size="9.33">41</text><rect x="750.51" y="528.40" width="4.90" height="10.650" fill="#c8f2c8" stroke="#868686" stroke-width="0.900"/><text x="768.01" y="536.15" font-size="9.33" text-anchor="end">56</text><text x="775.71" y="536.15" font-size="9.33">181</text><rect x="750.51" y="539.05" width="1.94" height="10.650" fill="#c8f2c8" stroke="#868686" stroke-width="0.900"/><text x="768.01" y="546.80" font-size="9.33" text-anchor="end">53</text><text x="775.71" y="546.80" font-size="9.33">94</text><rect x="750.51" y="549.70" width="2.43" height="10.650" fill="#ffb8b8" stroke="#868686" stroke-width="0.900"/><text x="768.01" y="557.45" font-size="9.33" text-anchor="end">99</text><text x="775.71" y="557.45" font-size="9.33">63</text><rect x="750.51" y="560.35" width="2.20" height="10.650" fill="#c8f2c8" stroke="#868686" stroke-width="0.900"/><text x="768.01" y="568.10" font-size="9.33" text-anchor="end">60</text><text x="775.71" y="568.10" font-size="9.33">95</text><text x="768.01" y="578.75" font-size="9.33" text-anchor="end">8</text><text x="775.71" y="578.75" font-size="9.33">0</text><rect x="799.08" y="367.65" width="2.700" height="117.15" fill="#3bada2"/><rect x="802.58" y="335.70" width="1.600" height="244.95" fill="#808080"/><rect x="803.38" y="336.70" width="1.60" height="10.650" fill="#c8f2c8" stroke="#868686" stroke-width="0.900"/><text x="820.88" y="344.45" font-size="9.33" text-anchor="end">12</text><text x="828.58" y="344.45" font-size="9.33">101</text><rect x="803.38" y="347.35" width="4.63" height="10.650" fill="#c8f2c8" stroke="#868686" stroke-width="0.900"/><text x="820.88" y="355.10" font-size="9.33" text-anchor="end">86</text><text x="828.58" y="355.10" font-size="9.33">143</text><rect x="803.38" y="358.00" width="6.64" height="10.650" fill="#8fe68f" stroke="#868686" stroke-width="0.900"/><text x="820.88" y="365.75" font-size="9.33" text-anchor="end">111</text><text x="828.58" y="365.75" font-size="9.33">179</text><text x="820.88" y="376.40" font-size="9.33" text-anchor="end">21</text><text x="828.58" y="376.40" font-size="9.33">60</text><rect x="803.38" y="379.30" width="1.60" height="10.650" fill="#c8f2c8" stroke="#868686" stroke-width="0.900"/><text x="820.88" y="387.05" font-size="9.33" text-anchor="end">20</text><text x="828.58" y="387.05" font-size="9.33">78</text><text x="820.88" y="397.70" font-size="9.33" text-anchor="end">2</text><text x="828.58" y="397.70" font-size="9.33">81</text><rect x="803.38" y="400.60" width="1.87" height="10.650" fill="#c8f2c8" stroke="#868686" stroke-width="0.900"/><text x="820.88" y="408.35" font-size="9.33" text-anchor="end">54</text><text x="828.58" y="408.35" font-size="9.33">91</text><rect x="803.38" y="411.25" width="2.53" height="10.650" fill="#ffb8b8" stroke="#868686" stroke-width="0.900"/><text x="820.88" y="419.00" font-size="9.33" text-anchor="end">84</text><text x="828.58" y="419.00" font-size="9.33">81</text><rect x="803.38" y="421.90" width="2.07" height="10.650" fill="#c8f2c8" stroke="#868686" stroke-width="0.900"/><text x="820.88" y="429.65" font-size="9.33" text-anchor="end">22</text><text x="828.58" y="429.65" font-size="9.33">129</text><text x="820.88" y="440.30" font-size="9.33" text-anchor="end">38</text><text x="828.58" y="440.30" font-size="9.33">32</text><text x="820.88" y="450.95" font-size="9.33" text-anchor="end">0</text><text x="828.58" y="450.95" font-size="9.33">88</text><text x="820.88" y="461.60" font-size="9.33" text-anchor="end">12</text><text x="828.58" y="461.60" font-size="9.33">49</text><rect x="803.38" y="464.50" width="3.84" height="10.650" fill="#c8f2c8" stroke="#868686" stroke-width="0.900"/><text x="820.88" y="472.25" font-size="9.33" text-anchor="end">75</text><text x="828.58" y="472.25" font-size="9.33">130</text><rect x="803.38" y="475.15" width="10.52" height="10.650" fill="#ff7c7c" stroke="#868686" stroke-width="0.900"/><text x="820.88" y="482.90" font-size="9.33" text-anchor="end">208</text><text x="828.58" y="482.90" font-size="9.33">200</text><rect x="803.38" y="485.80" width="7.69" height="10.650" fill="#ff7c7c" stroke="#868686" stroke-width="0.900"/><text x="820.88" y="493.55" font-size="9.33" text-anchor="end">178</text><text x="828.58" y="493.55" font-size="9.33">144</text><rect x="803.38" y="496.45" width="13.42" height="10.650" fill="#ff7c7c" stroke="#868686" stroke-width="0.900"/><text x="820.88" y="504.20" font-size="9.33" text-anchor="end">293</text><text x="828.58" y="504.20" font-size="9.33">203</text><rect x="803.08" y="507.30" width="44.800" height="10.100" fill="#fff"/><rect x="803.48" y="507.70" width="15.89" height="9.300" fill="#2fc52f"/><rect x="803.08" y="507.30" width="44.800" height="10.100" fill="none" stroke="#000" stroke-width="1"/><text x="803.78" y="514.85" font-size="9.33" font-weight="bold">265</text><text x="845.68" y="514.85" font-size="9.33" font-weight="bold" text-anchor="end">285</text><rect x="803.38" y="517.75" width="5.82" height="10.650" fill="#c8f2c8" stroke="#868686" stroke-width="0.900"/><text x="820.88" y="525.50" font-size="9.33" text-anchor="end">96</text><text x="828.58" y="525.50" font-size="9.33">169</text><rect x="803.38" y="528.40" width="3.78" height="10.650" fill="#c8f2c8" stroke="#868686" stroke-width="0.900"/><text x="820.88" y="536.15" font-size="9.33" text-anchor="end">98</text><text x="828.58" y="536.15" font-size="9.33">105</text><rect x="803.38" y="539.05" width="1.60" height="10.650" fill="#c8f2c8" stroke="#868686" stroke-width="0.900"/><text x="820.88" y="546.80" font-size="9.33" text-anchor="end">30</text><text x="828.58" y="546.80" font-size="9.33">90</text><rect x="803.38" y="549.70" width="7.40" height="10.650" fill="#8fe68f" stroke="#868686" stroke-width="0.900"/><text x="820.88" y="557.45" font-size="9.33" text-anchor="end">128</text><text x="828.58" y="557.45" font-size="9.33">185</text><rect x="803.38" y="560.35" width="5.00" height="10.650" fill="#c8f2c8" stroke="#868686" stroke-width="0.900"/><text x="820.88" y="568.10" font-size="9.33" text-anchor="end">115</text><text x="828.58" y="568.10" font-size="9.33">125</text><rect x="803.38" y="571.00" width="1.74" height="10.650" fill="#ffb8b8" stroke="#868686" stroke-width="0.900"/><text x="820.88" y="578.75" font-size="9.33" text-anchor="end">141</text><text x="828.58" y="578.75" font-size="9.33">0</text></g><path d="M37.500 373.500H952" stroke="#111" stroke-width="2.500" stroke-linecap="round" stroke-dasharray="0.010 6"/><path d="M951.500 238V899M36 898.500H952" stroke="#2b2b33" stroke-width="1" fill="none"/><path d="M83.50 898V904.500" stroke="#2b2b33" stroke-width="1"/><text x="60.50" y="917.700" font-size="14.4" fill="#111">03:30</text><path d="M136.50 898V904.500" stroke="#2b2b33" stroke-width="1"/><text x="113.50" y="917.700" font-size="14.4" fill="#111">04:00</text><path d="M189.50 898V904.500" stroke="#2b2b33" stroke-width="1"/><text x="166.50" y="917.700" font-size="14.4" fill="#111">04:30</text><path d="M242.50 898V904.500" stroke="#2b2b33" stroke-width="1"/><text x="219.50" y="917.700" font-size="14.4" fill="#111">05:00</text><path d="M295.50 898V904.500" stroke="#2b2b33" stroke-width="1"/><text x="272.50" y="917.700" font-size="14.4" fill="#111">05:30</text><path d="M347.50 898V904.500" stroke="#2b2b33" stroke-width="1"/><text x="324.50" y="917.700" font-size="14.4" fill="#111">06:00</text><path d="M400.50 898V904.500" stroke="#2b2b33" stroke-width="1"/><text x="377.50" y="917.700" font-size="14.4" fill="#111">06:30</text><path d="M453.50 898V904.500" stroke="#2b2b33" stroke-width="1"/><text x="430.50" y="917.700" font-size="14.4" fill="#111">07:00</text><path d="M506.50 898V904.500" stroke="#2b2b33" stroke-width="1"/><text x="483.50" y="917.700" font-size="14.4" fill="#111">07:30</text><path d="M559.50 898V904.500" stroke="#2b2b33" stroke-width="1"/><text x="536.50" y="917.700" font-size="14.4" fill="#111">08:00</text><path d="M612.50 898V904.500" stroke="#2b2b33" stroke-width="1"/><text x="589.50" y="917.700" font-size="14.4" fill="#111">08:30</text><path d="M665.50 898V904.500" stroke="#2b2b33" stroke-width="1"/><text x="642.50" y="917.700" font-size="14.4" fill="#111">09:00</text><path d="M718.50 898V904.500" stroke="#2b2b33" stroke-width="1"/><text x="695.50" y="917.700" font-size="14.4" fill="#111">09:30</text><path d="M770.50 898V904.500" stroke="#2b2b33" stroke-width="1"/><text x="747.50" y="917.700" font-size="14.4" fill="#111">10:00</text><path d="M823.50 898V904.500" stroke="#2b2b33" stroke-width="1"/><text x="800.50" y="917.700" font-size="14.4" fill="#111">10:30</text><text x="37.300" y="917.700" font-size="14.4" fill="#111">0</text><text x="959" y="260.00" font-size="14.4" fill="#111" letter-spacing="0.300">5287.50</text><text x="959" y="366.50" font-size="14.4" fill="#111" letter-spacing="0.300">5285.00</text><text x="959" y="473.00" font-size="14.4" fill="#111" letter-spacing="0.300">5282.50</text><text x="959" y="579.50" font-size="14.4" fill="#111" letter-spacing="0.300">5280.00</text><text x="959" y="686.00" font-size="14.4" fill="#111" letter-spacing="0.300">5277.50</text><text x="959" y="792.50" font-size="14.4" fill="#111" letter-spacing="0.300">5275.00</text><text x="959" y="899.00" font-size="14.4" fill="#111" letter-spacing="0.300">5272.50</text><path d="M952.500 373.700L960 365.300H1019.500V382.300H960Z" fill="#000"/><text x="959" y="378.200" font-size="14.4" fill="#ffffc8" letter-spacing="0.300">5284.75</text><rect x="1012.800" y="240.800" width="11.600" height="11.600" fill="#fff" stroke="#000" stroke-width="1"/><text x="1018.900" y="251.200" font-size="11.500" text-anchor="middle" fill="#000">F</text></svg>
<div style="left:34px;top:928.5px;width:800px;height:1px;background:#d2d2e0;"></div>
<svg class="a" style="left:41.00px;top:935.50px" width="6" height="10" viewBox="0 0 6 10"><path d="M6 0V10L0 5Z" fill="#1e1e1e"/></svg>
<div style="left:801.7px;top:934.3px;width:10.5px;height:11.7px;background:#c9c9d8;"></div>
<svg class="a" style="left:820.60px;top:935.50px" width="6" height="10" viewBox="0 0 6 10"><path d="M0 0V10L6 5Z" fill="#1e1e1e"/></svg>
<span class="t" style="left:840.30px;top:929.60px;font-size:15px;letter-spacing:-0.268px;">DOM Trader</span>
<span class="t" style="left:938.10px;top:929.60px;font-size:15px;letter-spacing:-0.318px;">Chart Trader</span>
<div id="tabs" style="left:2px;top:957px;width:1029px;height:30px;background:#eeeef2;border:1px solid #0078d0;border-top:none;"></div>
<div style="left:533px;top:957px;width:102px;height:27.6px;background:#0277cc;"></div>
<div style="left:635px;top:958px;width:49.5px;height:27.5px;background:#f5f5f7;border-right:1px solid #dcdce6;"></div>
<span class="t" style="left:11.70px;top:961.60px;font-size:15px;letter-spacing:-0.349px;">Orders</span>
<span class="t" style="left:71.70px;top:961.60px;font-size:15px;letter-spacing:-0.826px;">Trades</span>
<span class="t" style="left:129.20px;top:961.60px;font-size:15px;letter-spacing:-0.054px;">Positions - Active</span>
<span class="t" style="left:257.90px;top:961.60px;font-size:15px;letter-spacing:-0.186px;">Accounts</span>
<span class="t" style="left:334.00px;top:961.60px;font-size:15px;letter-spacing:-0.291px;">Statistics</span>
<span class="t" style="left:407.10px;top:961.60px;font-size:15px;letter-spacing:-0.194px;">Trading strategies</span>
<span class="t" style="left:541.30px;top:961.60px;font-size:15px;letter-spacing:-0.379px;color:#ffffff;">ES M30 chart</span>
<svg class="a" style="left:649.50px;top:961.50px" width="20" height="20" viewBox="0 0 20 20"><path d="M10 0V20M0 10H20" stroke="#1e1e1e" stroke-width="1.600"/></svg>
<div id="rightpanel" style="left:1036px;top:202px;width:881px;height:785px;background:#f5f5f7;border:2px solid #c7c8da;"></div>
<div style="left:1038px;top:236px;width:877px;height:2px;background:#ececf1;"></div>
<div style="left:1038px;top:956px;width:877px;height:2px;background:#ececf1;"></div>
<svg class="a" style="left:1043.20px;top:211.20px" width="20" height="17.6" viewBox="0 0 20 17.6"><path d="M1.15 8.8L5.85 1H14.15L18.85 8.8L14.15 16.6H5.85Z" fill="none" stroke="#7d7d7d" stroke-width="2.1" stroke-linejoin="miter"/><path d="M1.2 8.8L3.9 4.7H9.9L4.7 14.2Z" fill="#7d7d7d"/><path d="M13 7.3L9.8 12.7H16.2Z" fill="#7d7d7d"/></svg>
<span class="t" style="left:1073.00px;top:209.60px;font-size:15px;letter-spacing:-0.931px;color:#7d7d7d;">#ESM4@CME</span>
<svg class="a" style="left:1170.50px;top:211.60px" width="15" height="15" viewBox="0 0 15 15"><circle cx="5.600" cy="5.600" r="4.100" fill="none" stroke="#7d7d7d" stroke-width="2.300"/><path d="M8.800 8.800L13.400 13.400" stroke="#7d7d7d" stroke-width="3.200" stroke-linecap="round"/></svg>
<span class="t" style="left:1195.80px;top:209.60px;font-size:15px;letter-spacing:-0.099px;color:#7d7d7d;">M30 chart</span>
<svg class="a" style="left:1270.50px;top:217.30px" width="9.20" height="4.60" viewBox="0 0 10 5"><path d="M0 0H10L5 5Z" fill="#7d7d7d"/></svg>
<span class="t" style="left:1289.20px;top:209.60px;font-size:15px;letter-spacing:-0.572px;color:#7d7d7d;">1 Lots</span>
<svg class="a" style="left:1335.50px;top:217.22px" width="9.50" height="4.75" viewBox="0 0 10 5"><path d="M0 0H10L5 5Z" fill="#7d7d7d"/></svg>
<svg class="a" style="left:1354.60px;top:212.40px" width="17" height="14" viewBox="0 0 17 14"><rect x="0.700" y="0.700" width="15.600" height="9.800" rx="1" fill="none" stroke="#7d7d7d" stroke-width="1.400"/><path d="M3 3.200H14M3 5.400H14M3 7.600H14" stroke="#7d7d7d" stroke-width="1"/><path d="M6.500 10.500L5.500 13H11.500L10.500 10.500Z" fill="#7d7d7d"/><path d="M4 13.300H13" stroke="#7d7d7d" stroke-width="1.200"/></svg>
<svg class="a" style="left:1380.30px;top:217.25px" width="9.40" height="4.70" viewBox="0 0 10 5"><path d="M0 0H10L5 5Z" fill="#7d7d7d"/></svg>
<svg class="a" style="left:1400.00px;top:211.70px" width="16" height="15" viewBox="0 0 16 15"><path d="M0.600 14.600L1.600 10.400L10.800 1.800L13.600 4.600L4.400 13.400Z" fill="#7d7d7d"/><path d="M11.800 1L13.200 -0.200L15.600 2.400L14.400 3.600Z" fill="#7d7d7d"/><path d="M3.200 11.600L10.900 4.300" stroke="#f5f5f7" stroke-width="0.900"/></svg>
<svg class="a" style="left:1425.00px;top:217.22px" width="9.50" height="4.75" viewBox="0 0 10 5"><path d="M0 0H10L5 5Z" fill="#7d7d7d"/></svg>
<svg class="a" style="left:1445.30px;top:212.00px" width="16" height="15" viewBox="0 0 16 15"><circle cx="6" cy="6" r="4.900" fill="none" stroke="#7d7d7d" stroke-width="1.600"/><path d="M9.600 9.600L15 14.600" stroke="#7d7d7d" stroke-width="2.200" stroke-linecap="round"/><path d="M6 3.800V8.200M3.800 6H8.200" stroke="#7d7d7d" stroke-width="1.500"/></svg>
<svg class="a" style="left:1476.60px;top:212.00px" width="17" height="15" viewBox="0 0 17 15"><path d="M1.200 0V13.600H16.500" fill="none" stroke="#7d7d7d" stroke-width="2"/><path d="M4.500 11.500L7.400 4.600L10.600 10L14.400 3" fill="none" stroke="#7d7d7d" stroke-width="1.600"/></svg>
<svg class="a" style="left:1510.00px;top:211.00px" width="15" height="16" viewBox="0 0 15 16"><path d="M7.500 0.300V15.700M0 8H15" stroke="#7d7d7d" stroke-width="3.200"/></svg>
<svg class="a" style="left:1534.20px;top:217.22px" width="9.50" height="4.75" viewBox="0 0 10 5"><path d="M0 0H10L5 5Z" fill="#7d7d7d"/></svg>
<svg class="a" style="left:1553.70px;top:212.40px" width="16" height="14" viewBox="0 0 16 14"><rect x="2.600" y="0.600" width="12.800" height="10.200" fill="#f5f5f7" stroke="#7d7d7d" stroke-width="1.100"/><path d="M0.600 3V13.400H13" fill="none" stroke="#7d7d7d" stroke-width="1.100"/></svg>
<svg class="a" style="left:1579.20px;top:217.22px" width="9.50" height="4.75" viewBox="0 0 10 5"><path d="M0 0H10L5 5Z" fill="#7d7d7d"/></svg>
<span class="t" style="left:1607.20px;top:210.60px;font-size:15px;letter-spacing:-0.345px;color:#7d7d7d;">Chart</span>
<svg class="a" style="left:1672.00px;top:214.00px" width="12" height="12" viewBox="0 0 12 12"><path d="M0.500 11.500L5 7M5 10.200V7H1.800M11.500 0.500L7 5M7 1.800V5H10.200M1.500 1.500L4 4M10.500 10.500L8 8" fill="none" stroke="#7d7d7d" stroke-width="1.100"/></svg>
<svg class="a" style="left:1695.00px;top:217.17px" width="9.70" height="4.85" viewBox="0 0 10 5"><path d="M0 0H10L5 5Z" fill="#7d7d7d"/></svg>
<svg class="a" style="left:1714.50px;top:213.00px" width="16.4" height="13.9" viewBox="0 0 16.5 14"><path d="M1.800 3H4.400L5.800 0.800H10.700L12.100 3H14.700a1.200 1.200 0 0 1 1.200 1.200V12a1.200 1.200 0 0 1 -1.200 1.200H1.800A1.200 1.200 0 0 1 0.600 12V4.200A1.200 1.200 0 0 1 1.800 3Z" fill="none" stroke="#7d7d7d" stroke-width="1.200"/><circle cx="8.250" cy="7.900" r="2.700" fill="none" stroke="#7d7d7d" stroke-width="1.200"/></svg>
<svg class="a" style="left:1745.00px;top:210.20px" width="20" height="20" viewBox="0 0 20 20"><path d="M1.500 1.500L18.500 18.500M18.500 1.500L1.500 18.500" stroke="#7d7d7d" stroke-width="1.900"/><path d="M1 7V1H7M13 1H19V7M19 13V19H13M7 19H1V13" fill="none" stroke="#7d7d7d" stroke-width="2.400"/></svg>
<svg class="a" style="left:1777.40px;top:210.50px" width="19" height="19" viewBox="0 0 19 19"><circle cx="9.500" cy="9.500" r="8.800" fill="#f8f8fa" stroke="#999" stroke-width="0.900"/></svg>
<svg class="a" style="left:1803.70px;top:217.15px" width="9.80" height="4.90" viewBox="0 0 10 5"><path d="M0 0H10L5 5Z" fill="#7d7d7d"/></svg>
<svg class="a" style="left:1824.00px;top:213.50px" width="16" height="14" viewBox="0 0 16 14"><path d="M2 12.500L12 2.500" stroke="#7d7d7d" stroke-width="2.300" stroke-linecap="round"/><path d="M10.300 1.200L13.600 -0.200L12.800 2.600L15.200 3.800L12.400 5.200Z" fill="#7d7d7d"/><path d="M4.200 3.800L13.600 12.600" stroke="#7d7d7d" stroke-width="2.100" stroke-linecap="round"/><path d="M0.600 3.600L4.200 0.400L6.800 3L3.400 6.200Z" fill="#7d7d7d"/></svg>
<svg class="a" style="left:1861.50px;top:213.00px" width="10" height="14" viewBox="0 0 10 14"><path d="M2.500 0.600H7.500M3 0.600V6.200H7V0.600M0.800 6.800H9.200M5 7V13.600" fill="none" stroke="#7d7d7d" stroke-width="1.500"/><rect x="3" y="1" width="2.600" height="5.600" fill="#7d7d7d"/></svg>
<svg class="a" style="left:1893.50px;top:215.00px" width="11" height="10.4" viewBox="0 0 11 10.4"><path d="M0.700 0.700L10.3 9.700000000000001M10.3 0.700L0.700 9.700000000000001" stroke="#7d7d7d" stroke-width="1.8"/></svg>
<div style="left:1040px;top:238px;width:873px;height:718px;background:#ffffff;"></div>
<svg class="a" style="left:1040px;top:238px;overflow:hidden" width="873" height="718" viewBox="1040 238 873 718"><path d="M1105.50 238V930" stroke="#f3e2e7" stroke-width="1"/><path d="M1196.50 238V930" stroke="#f3e2e7" stroke-width="1"/><path d="M1286.50 238V930" stroke="#f3e2e7" stroke-width="1"/><path d="M1377.50 238V930" stroke="#f3e2e7" stroke-width="1"/><path d="M1468.50 238V930" stroke="#f3e2e7" stroke-width="1"/><path d="M1559.50 238V930" stroke="#f3e2e7" stroke-width="1"/><path d="M1649.50 238V930" stroke="#f3e2e7" stroke-width="1"/><path d="M1740.50 238V930" stroke="#f3e2e7" stroke-width="1"/><path d="M1040 277.50H1837" stroke="#f3e2e7" stroke-width="1"/><path d="M1040 333.50H1837" stroke="#f3e2e7" stroke-width="1"/><path d="M1040 389.50H1837" stroke="#f3e2e7" stroke-width="1"/><path d="M1040 445.50H1837" stroke="#f3e2e7" stroke-width="1"/><path d="M1040 501.50H1837" stroke="#f3e2e7" stroke-width="1"/><path d="M1040 557.50H1837" stroke="#f3e2e7" stroke-width="1"/><path d="M1040 613.50H1837" stroke="#f3e2e7" stroke-width="1"/><path d="M1040 668.50H1837" stroke="#f3e2e7" stroke-width="1"/><path d="M1040 724.50H1837" stroke="#f3e2e7" stroke-width="1"/><path d="M1040 780.50H1837" stroke="#f3e2e7" stroke-width="1"/><path d="M1040 836.50H1837" stroke="#f3e2e7" stroke-width="1"/><path d="M1040 892.50H1837" stroke="#f3e2e7" stroke-width="1"/><path d="M1196.500 238V930" stroke="#555" stroke-width="1"/><rect x="1030" y="562" width="16" height="17.600" fill="#ef5350" stroke="#2e2e2e" stroke-width="1"/><path d="M1060.00 523.30V669.40" stroke="#2e2e2e" stroke-width="1.200"/><rect x="1052.30" y="573.30" width="15.400" height="89.70" fill="#ef5350" stroke="#2e2e2e" stroke-width="1"/><path d="M1082.70 607.30V741.50" stroke="#2e2e2e" stroke-width="1.200"/><rect x="1075.00" y="657.00" width="15.400" height="56.50" fill="#ef5350" stroke="#2e2e2e" stroke-width="1"/><path d="M1105.40 696.00V940.00" stroke="#2e2e2e" stroke-width="1.200"/><rect x="1097.70" y="719.00" width="15.400" height="221.00" fill="#ef5350" stroke="#2e2e2e" stroke-width="1"/><path d="M1128.10 741.50V940.00" stroke="#2e2e2e" stroke-width="1.200"/><rect x="1120.40" y="831.50" width="15.400" height="108.50" fill="#26a69a" stroke="#2e2e2e" stroke-width="1"/><path d="M1150.80 702.40V831.50" stroke="#2e2e2e" stroke-width="1.200"/><rect x="1143.10" y="713.20" width="15.400" height="118.30" fill="#26a69a" stroke="#2e2e2e" stroke-width="1"/><path d="M1173.50 685.60V752.40" stroke="#2e2e2e" stroke-width="1.200"/><rect x="1165.80" y="713.20" width="15.400" height="34.20" fill="#ef5350" stroke="#2e2e2e" stroke-width="1"/><path d="M1196.20 708.20V792.40" stroke="#2e2e2e" stroke-width="1.200"/><rect x="1188.50" y="708.20" width="15.400" height="50.30" fill="#ef5350" stroke="#2e2e2e" stroke-width="1"/><path d="M1218.90 752.40V775.30" stroke="#2e2e2e" stroke-width="1.200"/><path d="M1211.70 758.20H1226.10" stroke="#2e2e2e" stroke-width="1.200"/><path d="M1241.60 641.50V764.40" stroke="#2e2e2e" stroke-width="1.200"/><rect x="1233.90" y="641.50" width="15.400" height="110.90" fill="#26a69a" stroke="#2e2e2e" stroke-width="1"/><path d="M1264.30 395.60V641.50" stroke="#2e2e2e" stroke-width="1.200"/><rect x="1256.60" y="529.20" width="15.400" height="112.30" fill="#26a69a" stroke="#2e2e2e" stroke-width="1"/><path d="M1287.00 529.10V613.20" stroke="#2e2e2e" stroke-width="1.200"/><rect x="1279.30" y="534.30" width="15.400" height="45.30" fill="#ef5350" stroke="#2e2e2e" stroke-width="1"/><path d="M1309.70 562.30V618.60" stroke="#2e2e2e" stroke-width="1.200"/><rect x="1302.00" y="573.30" width="15.400" height="34.10" fill="#ef5350" stroke="#2e2e2e" stroke-width="1"/><path d="M1332.40 579.30V624.60" stroke="#2e2e2e" stroke-width="1.200"/><rect x="1324.70" y="596.40" width="15.400" height="5.20" fill="#26a69a" stroke="#2e2e2e" stroke-width="1"/><path d="M1355.10 579.30V618.60" stroke="#2e2e2e" stroke-width="1.200"/><rect x="1347.40" y="590.30" width="15.400" height="6.30" fill="#26a69a" stroke="#2e2e2e" stroke-width="1"/><path d="M1377.80 551.30V601.60" stroke="#2e2e2e" stroke-width="1.200"/><rect x="1370.10" y="562.30" width="15.400" height="23.30" fill="#26a69a" stroke="#2e2e2e" stroke-width="1"/><path d="M1400.50 529.10V562.70" stroke="#2e2e2e" stroke-width="1.200"/><rect x="1392.80" y="546.10" width="15.400" height="16.60" fill="#26a69a" stroke="#2e2e2e" stroke-width="1"/><path d="M1423.20 506.40V557.60" stroke="#2e2e2e" stroke-width="1.200"/><rect x="1415.50" y="518.30" width="15.400" height="28.30" fill="#26a69a" stroke="#2e2e2e" stroke-width="1"/><path d="M1445.90 495.20V546.60" stroke="#2e2e2e" stroke-width="1.200"/><rect x="1438.20" y="501.30" width="15.400" height="17.20" fill="#26a69a" stroke="#2e2e2e" stroke-width="1"/><path d="M1468.60 473.20V512.70" stroke="#2e2e2e" stroke-width="1.200"/><rect x="1460.90" y="478.20" width="15.400" height="17.50" fill="#26a69a" stroke="#2e2e2e" stroke-width="1"/><path d="M1491.30 445.20V490.70" stroke="#2e2e2e" stroke-width="1.200"/><rect x="1483.60" y="484.20" width="15.400" height="6.50" fill="#ef5350" stroke="#2e2e2e" stroke-width="1"/><path d="M1514.00 484.20V568.50" stroke="#2e2e2e" stroke-width="1.200"/><rect x="1506.30" y="490.30" width="15.400" height="72.20" fill="#ef5350" stroke="#2e2e2e" stroke-width="1"/><path d="M1536.70 534.40V568.60" stroke="#2e2e2e" stroke-width="1.200"/><rect x="1529.00" y="562.50" width="15.400" height="6.10" fill="#ef5350" stroke="#2e2e2e" stroke-width="1"/><path d="M1559.40 562.50V618.50" stroke="#2e2e2e" stroke-width="1.200"/><rect x="1551.70" y="568.30" width="15.400" height="39.30" fill="#ef5350" stroke="#2e2e2e" stroke-width="1"/><path d="M1582.10 557.40V613.40" stroke="#2e2e2e" stroke-width="1.200"/><rect x="1574.40" y="590.50" width="15.400" height="17.10" fill="#26a69a" stroke="#2e2e2e" stroke-width="1"/><path d="M1604.80 484.20V618.50" stroke="#2e2e2e" stroke-width="1.200"/><rect x="1597.10" y="495.40" width="15.400" height="90.00" fill="#26a69a" stroke="#2e2e2e" stroke-width="1"/><path d="M1627.50 462.30V523.50" stroke="#2e2e2e" stroke-width="1.200"/><rect x="1619.80" y="484.20" width="15.400" height="11.20" fill="#26a69a" stroke="#2e2e2e" stroke-width="1"/><path d="M1650.20 428.10V501.30" stroke="#2e2e2e" stroke-width="1.200"/><rect x="1642.50" y="450.60" width="15.400" height="33.90" fill="#26a69a" stroke="#2e2e2e" stroke-width="1"/><path d="M1672.90 400.10V501.30" stroke="#2e2e2e" stroke-width="1.200"/><rect x="1665.20" y="445.20" width="15.400" height="33.40" fill="#ef5350" stroke="#2e2e2e" stroke-width="1"/><path d="M1695.60 417.20V506.90" stroke="#2e2e2e" stroke-width="1.200"/><rect x="1687.90" y="428.40" width="15.400" height="50.20" fill="#26a69a" stroke="#2e2e2e" stroke-width="1"/><path d="M1718.30 423.00V467.40" stroke="#2e2e2e" stroke-width="1.200"/><rect x="1710.60" y="428.40" width="15.400" height="22.20" fill="#ef5350" stroke="#2e2e2e" stroke-width="1"/><path d="M1741.00 423.00V501.30" stroke="#2e2e2e" stroke-width="1.200"/><rect x="1733.30" y="445.20" width="15.400" height="5.40" fill="#ef5350" stroke="#2e2e2e" stroke-width="1"/><path d="M1763.70 378.20V501.30" stroke="#2e2e2e" stroke-width="1.200"/><rect x="1756.00" y="395.00" width="15.400" height="55.60" fill="#26a69a" stroke="#2e2e2e" stroke-width="1"/><path d="M1041.500 395.500H1838" stroke="#111" stroke-width="2.500" stroke-linecap="round" stroke-dasharray="0.010 6"/><rect x="1040" y="930.500" width="873" height="26" fill="#fff"/><path d="M1837.500 238V930.500M1040 930.500H1838" stroke="#2b2b33" stroke-width="1" fill="none"/><path d="M1105.40 930V936.500" stroke="#2b2b33" stroke-width="1"/><text x="1082.40" y="949.700" font-size="14.4" fill="#111">19:00</text><path d="M1196.12 930V936.500" stroke="#2b2b33" stroke-width="1"/><text x="1173.12" y="949.700" font-size="14.4" fill="#111">22:00</text><path d="M1286.84 930V936.500" stroke="#2b2b33" stroke-width="1"/><text x="1263.84" y="949.700" font-size="14.4" fill="#111">00:00</text><path d="M1377.56 930V936.500" stroke="#2b2b33" stroke-width="1"/><text x="1354.56" y="949.700" font-size="14.4" fill="#111">02:00</text><path d="M1468.28 930V936.500" stroke="#2b2b33" stroke-width="1"/><text x="1445.28" y="949.700" font-size="14.4" fill="#111">04:00</text><path d="M1559.00 930V936.500" stroke="#2b2b33" stroke-width="1"/><text x="1536.00" y="949.700" font-size="14.4" fill="#111">06:00</text><path d="M1649.72 930V936.500" stroke="#2b2b33" stroke-width="1"/><text x="1626.72" y="949.700" font-size="14.4" fill="#111">08:00</text><path d="M1740.44 930V936.500" stroke="#2b2b33" stroke-width="1"/><text x="1717.44" y="949.700" font-size="14.4" fill="#111">10:00</text><path d="M1837 277.20H1843.500" stroke="#2b2b33" stroke-width="1"/><text x="1845" y="281.90" font-size="14.4" fill="#111" letter-spacing="0.300">5290.00</text><path d="M1837 333.10H1843.500" stroke="#2b2b33" stroke-width="1"/><text x="1845" y="337.80" font-size="14.4" fill="#111" letter-spacing="0.300">5287.50</text><path d="M1837 389.00H1843.500" stroke="#2b2b33" stroke-width="1"/><text x="1845" y="393.70" font-size="14.4" fill="#111" letter-spacing="0.300">5285.00</text><path d="M1837 444.90H1843.500" stroke="#2b2b33" stroke-width="1"/><text x="1845" y="449.60" font-size="14.4" fill="#111" letter-spacing="0.300">5282.50</text><path d="M1837 500.80H1843.500" stroke="#2b2b33" stroke-width="1"/><text x="1845" y="505.50" font-size="14.4" fill="#111" letter-spacing="0.300">5280.00</text><path d="M1837 556.70H1843.500" stroke="#2b2b33" stroke-width="1"/><text x="1845" y="561.40" font-size="14.4" fill="#111" letter-spacing="0.300">5277.50</text><path d="M1837 612.60H1843.500" stroke="#2b2b33" stroke-width="1"/><text x="1845" y="617.30" font-size="14.4" fill="#111" letter-spacing="0.300">5275.00</text><path d="M1837 668.50H1843.500" stroke="#2b2b33" stroke-width="1"/><text x="1845" y="673.20" font-size="14.4" fill="#111" letter-spacing="0.300">5272.50</text><path d="M1837 724.40H1843.500" stroke="#2b2b33" stroke-width="1"/><text x="1845" y="729.10" font-size="14.4" fill="#111" letter-spacing="0.300">5270.00</text><path d="M1837 780.30H1843.500" stroke="#2b2b33" stroke-width="1"/><text x="1845" y="785.00" font-size="14.4" fill="#111" letter-spacing="0.300">5267.50</text><path d="M1837 836.20H1843.500" stroke="#2b2b33" stroke-width="1"/><text x="1845" y="840.90" font-size="14.4" fill="#111" letter-spacing="0.300">5265.00</text><path d="M1837 892.10H1843.500" stroke="#2b2b33" stroke-width="1"/><text x="1845" y="896.80" font-size="14.4" fill="#111" letter-spacing="0.300">5262.50</text><path d="M1838.500 395.700L1846 387.300H1905V404.300H1846Z" fill="#000"/><text x="1845" y="400" font-size="14.4" fill="#ffffc8" letter-spacing="0.300">5284.75</text><rect x="1898.500" y="240.800" width="11.600" height="11.600" fill="#fff" stroke="#000" stroke-width="1"/><text x="1904.600" y="251.200" font-size="11.500" text-anchor="middle" fill="#000">F</text><rect x="1792.800" y="240.800" width="19.600" height="19.600" fill="#fff" stroke="#000" stroke-width="1"/><path d="M1797.500 245.500V256L1806 250.750ZM1806.200 245.500H1808.200V256H1806.200Z" fill="#000"/></svg>
<div style="left:1040px;top:960.5px;width:650px;height:1px;background:#cfd0e0;"></div>
<svg class="a" style="left:1046.00px;top:967.00px" width="6" height="10" viewBox="0 0 6 10"><path d="M6 0V10L0 5Z" fill="#1e1e1e"/></svg>
<div style="left:1688px;top:966px;width:10.5px;height:11.7px;background:#c9c9d8;"></div>
<svg class="a" style="left:1706.50px;top:967.00px" width="6" height="10" viewBox="0 0 6 10"><path d="M0 0V10L6 5Z" fill="#1e1e1e"/></svg>
<span class="t" style="left:1726.50px;top:961.30px;font-size:15px;letter-spacing:-0.279px;">DOM Trader</span>
<span class="t" style="left:1824.30px;top:961.30px;font-size:15px;letter-spacing:-0.318px;">Chart Trader</span>
<span class="t" style="left:5.30px;top:995.60px;font-size:15px;letter-spacing:-0.258px;color:#2a8a1e;">E2 - server connected.</span>
<svg class="a" style="left:158.30px;top:1003.30px" width="9.20" height="4.60" viewBox="0 0 10 5"><path d="M0 0H10L5 5Z" fill="#1e1e1e"/></svg>
<span class="t" style="left:177.50px;top:995.60px;font-size:15px;letter-spacing:-0.305px;color:#d93030;">Feed Source: Offline</span>
</div>
</body></html>
